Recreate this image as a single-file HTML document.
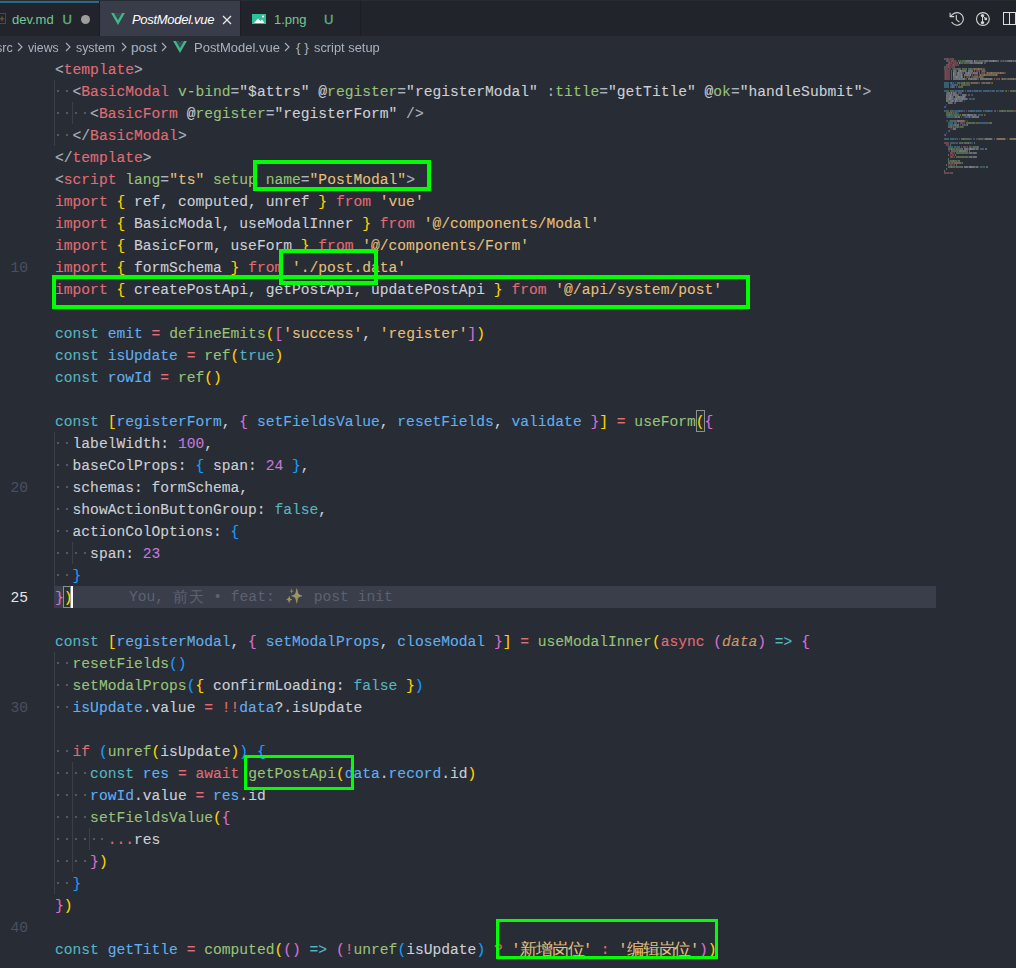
<!DOCTYPE html>
<html><head><meta charset="utf-8">
<style>
html,body{margin:0;padding:0;}
body{width:1016px;height:968px;overflow:hidden;background:#282c34;position:relative;font-family:"Liberation Sans",sans-serif;}
.tabs{position:absolute;left:0;top:0;width:1016px;height:36px;background:#21252b;}
.tab{position:absolute;top:0;height:36px;}
.tt{position:absolute;top:2px;height:36px;line-height:36px;font-size:13px;white-space:pre;}
.ct{position:absolute;top:1px;height:22px;line-height:22px;font-size:13.6px;transform-origin:0 50%;white-space:pre;color:#abb2bf;}
.chev{position:absolute;top:6px;width:7px;height:11px;}
.crumbs{position:absolute;left:0;top:36px;width:1016px;height:22px;background:#282c34;color:#abb2bf;font-size:13px;}
.ln{position:absolute;height:22px;line-height:22px;white-space:pre;font-family:"Liberation Mono",monospace;font-size:14.63px;color:#ccd0d7;-webkit-text-stroke:0.1px currentColor;}
.num{position:absolute;left:0;width:28px;text-align:right;height:22px;line-height:22px;font-family:"Liberation Mono",monospace;font-size:14.63px;color:#495162;}
.num.cur{color:#e6e6e6;}
.dot{position:absolute;width:2px;height:2px;background:#53575f;box-shadow:0 0 1px #464a52;}
.guide{position:absolute;width:1px;background:#3b4048;}
.p{color:#abb2bf}.t{color:#e06c75}.a{color:#98c379}.w{color:#ccd0d7}.k{color:#e06c75}.c{color:#56b6c2}.v{color:#61afef}.f{color:#98c379}.o{color:#e06c75}.n{color:#c678dd}.s{color:#e5c07b}.y{color:#ffd700}.m{color:#da70d6}.l{color:#179fff}.d{color:#d19a66}
.it{font-style:italic}
.bmb{position:absolute;height:22px;box-sizing:border-box;border:1px solid #8b8f96;background:#26332f;}
.cj{position:relative;top:-1.5px;display:inline-block;width:15.75px;text-align:center;font-size:16.5px;font-family:"Liberation Sans",sans-serif;-webkit-text-stroke:0;vertical-align:top;line-height:22px;height:22px;}
.curline{position:absolute;left:54px;top:586px;width:882px;height:22px;background:#393e4a;}
.cursor{position:absolute;left:71px;top:586px;width:2px;height:22px;background:#ffffff;}
.blame{position:absolute;left:129px;top:586px;height:22px;line-height:22px;font-family:"Liberation Mono",monospace;font-size:14.63px;color:#5c6370;white-space:pre;}
.cjb{display:inline-block;width:15.8px;font-family:"Liberation Sans",sans-serif;vertical-align:top;height:22px;line-height:22px;}
.emo{display:inline-block;width:21.5px;text-align:center;opacity:0.55;vertical-align:top;height:22px;line-height:22px;filter:saturate(0.6);}
.box{position:absolute;border:4px solid #00ff00;box-sizing:border-box;}
</style></head><body>
<div class="tabs">
  <div style="position:absolute;left:0;top:0;width:1016px;height:1px;background:#272b32;z-index:2;"></div>
  <div class="tab" style="left:0;width:100px;background:#21252b;"></div>
  <div style="position:absolute;left:0;top:1px;width:99px;height:2px;background:#2c6a8a;"></div>
  <svg style="position:absolute;left:-4px;top:13px" width="10" height="11" viewBox="0 0 10 11"><rect x="0.5" y="0.5" width="9" height="10" fill="none" stroke="#5a452f" stroke-width="1"/><path d="M6 3.5v4.5M3.8 5.8h4.4" stroke="#7a5c3b" stroke-width="1.1"/></svg>
  <div class="tt" style="left:12px;color:#73c991;">dev.md</div>
  <div class="tt" style="left:62.5px;color:#63b07e;-webkit-text-stroke:0.35px #63b07e;">U</div>
  <div style="position:absolute;left:80.5px;top:14.5px;width:9px;height:9px;border-radius:50%;background:#9d9d9d;"></div>
  <div style="position:absolute;left:99px;top:0;width:1px;height:36px;background:#1b1d23;"></div>
  <div class="tab" style="left:100px;top:1px;height:35px;width:140px;background:#383d49;"></div>
  <svg style="position:absolute;left:111px;top:13px" width="14" height="12" viewBox="0 0 261.76 226.69"><path d="M161.096.001l-30.225 52.351L100.647.001H-.005l130.877 226.688L261.749.001z" fill="#41b883"/><path d="M161.096.001l-30.225 52.351L100.647.001H52.346l78.526 136.01L209.398.001z" fill="#34495e"/></svg>
  <div class="tt" style="left:132px;color:#ffffff;font-style:italic;letter-spacing:-0.3px;">PostModel.vue</div>
  <svg style="position:absolute;left:222px;top:15px" width="10" height="10" viewBox="0 0 10 10"><path d="M1 1L9 9M9 1L1 9" stroke="#e8e8e8" stroke-width="1.3"/></svg>
  <div style="position:absolute;left:240px;top:0;width:1px;height:36px;background:#1b1d23;"></div>
  <div class="tab" style="left:241px;width:119px;background:#21252b;"></div>
  <svg style="position:absolute;left:252px;top:14px" width="14" height="10" viewBox="0 0 14 10"><rect x="0" y="0" width="14" height="10" fill="#2fbf9a"/><path d="M2 9L6 4.5L8.5 7L10 5.5L12.5 9Z" fill="#ffffff"/><circle cx="11" cy="2.5" r="1.1" fill="#ffffff"/></svg>
  <div class="tt" style="left:274px;color:#73c991;">1.png</div>
  <div class="tt" style="left:324px;color:#63b07e;-webkit-text-stroke:0.35px #63b07e;">U</div>
  <div style="position:absolute;left:360px;top:0;width:1px;height:36px;background:#1b1d23;"></div>
  <svg style="position:absolute;left:945px;top:8px" width="24" height="22" viewBox="0 0 24 22">
    <path d="M7.6 6.45A6.3 6.3 0 1 1 6.6 14.05" fill="none" stroke="#d4d4d4" stroke-width="1.1"/>
    <path d="M5.1 4.8V8.6H9.2" fill="none" stroke="#d4d4d4" stroke-width="1.1"/>
    <path d="M5.4 8.3L7.9 6.2" fill="none" stroke="#d4d4d4" stroke-width="1.1"/>
    <path d="M11.3 7V11.6L14.4 14.2" fill="none" stroke="#d4d4d4" stroke-width="1.1"/>
  </svg>
  <svg style="position:absolute;left:971px;top:8px" width="24" height="22" viewBox="0 0 24 22">
    <circle cx="11.9" cy="11" r="6.4" fill="none" stroke="#d4d4d4" stroke-width="1.1"/>
    <path d="M11.5 7.6V14.6M12.2 8.3L14.8 10.9" fill="none" stroke="#d4d4d4" stroke-width="1"/>
    <circle cx="11.5" cy="7.6" r="1.7" fill="#d4d4d4"/><circle cx="11.5" cy="14.6" r="1.7" fill="#d4d4d4"/><circle cx="14.8" cy="10.9" r="1.4" fill="#d4d4d4"/>
  </svg>
  <svg style="position:absolute;left:996px;top:8px" width="20" height="22" viewBox="0 0 20 22">
    <rect x="7.5" y="4.5" width="12" height="12" fill="none" stroke="#dedede" stroke-width="1"/>
    <path d="M13.5 4.5V16.5" stroke="#dedede" stroke-width="1"/>
  </svg>
</div>
<div class="crumbs">
  <div class="ct" style="left:-4px;transform:scaleX(0.93)">src</div>
  <svg class="chev" style="left:17px"><path d="M1 1L5 5L1 9" fill="none" stroke="#abb2bf" stroke-width="1.1"/></svg>
  <div class="ct" style="left:28px;transform:scaleX(0.90)">views</div>
  <svg class="chev" style="left:65px"><path d="M1 1L5 5L1 9" fill="none" stroke="#abb2bf" stroke-width="1.1"/></svg>
  <div class="ct" style="left:76px;transform:scaleX(0.91)">system</div>
  <svg class="chev" style="left:120.5px"><path d="M1 1L5 5L1 9" fill="none" stroke="#abb2bf" stroke-width="1.1"/></svg>
  <div class="ct" style="left:131px;transform:scaleX(1.0)">post</div>
  <svg class="chev" style="left:161px"><path d="M1 1L5 5L1 9" fill="none" stroke="#abb2bf" stroke-width="1.1"/></svg>
  <svg style="position:absolute;left:173px;top:4.5px" width="14" height="12" viewBox="0 0 261.76 226.69"><path d="M161.096.001l-30.225 52.351L100.647.001H-.005l130.877 226.688L261.749.001z" fill="#41b883"/><path d="M161.096.001l-30.225 52.351L100.647.001H52.346l78.526 136.01L209.398.001z" fill="#34495e"/></svg>
  <div class="ct" style="left:194px;transform:scaleX(0.955)">PostModel.vue</div>
  <svg class="chev" style="left:284px"><path d="M1 1L5 5L1 9" fill="none" stroke="#abb2bf" stroke-width="1.1"/></svg>
  <div class="ct" style="left:296px;">{ }</div>
  <div class="ct" style="left:313.5px;transform:scaleX(0.945)">script setup</div>
</div>
<div class="curline"></div>
<div class="bmb" style="left:62.98px;top:586px;width:8.28px;"></div>
<div class="bmb" style="left:695.94px;top:410px;width:8.78px;"></div>
<div class="ln" style="top:59px;left:55.00px"><span class="p">&lt;</span><span class="t">template</span><span class="p">&gt;</span></div>
<div class="dot" style="left:57.40px;top:90px"></div>
<div class="dot" style="left:66.18px;top:90px"></div>
<div class="ln" style="top:81px;left:72.56px"><span class="p">&lt;</span><span class="t">BasicModal</span> <span class="a">v-bind</span><span class="p">=</span><span class="w">&quot;$attrs&quot;</span> <span class="w">@</span><span class="a">register</span><span class="p">=</span><span class="w">&quot;registerModal&quot;</span> <span class="p">:</span><span class="a">title</span><span class="p">=</span><span class="w">&quot;getTitle&quot;</span> <span class="w">@</span><span class="a">ok</span><span class="p">=</span><span class="w">&quot;handleSubmit&quot;</span><span class="p">&gt;</span></div>
<div class="dot" style="left:57.40px;top:112px"></div>
<div class="dot" style="left:66.18px;top:112px"></div>
<div class="dot" style="left:74.96px;top:112px"></div>
<div class="dot" style="left:83.74px;top:112px"></div>
<div class="ln" style="top:103px;left:90.12px"><span class="p">&lt;</span><span class="t">BasicForm</span> <span class="w">@</span><span class="a">register</span><span class="p">=</span><span class="w">&quot;registerForm&quot;</span> <span class="p">/&gt;</span></div>
<div class="dot" style="left:57.40px;top:134px"></div>
<div class="dot" style="left:66.18px;top:134px"></div>
<div class="ln" style="top:125px;left:72.56px"><span class="p">&lt;/</span><span class="t">BasicModal</span><span class="p">&gt;</span></div>
<div class="ln" style="top:147px;left:55.00px"><span class="p">&lt;/</span><span class="t">template</span><span class="p">&gt;</span></div>
<div class="ln" style="top:169px;left:55.00px"><span class="p">&lt;</span><span class="t">script</span> <span class="a">lang</span><span class="p">=</span><span class="s">&quot;ts&quot;</span> <span class="a">setup</span> <span class="a">name</span><span class="p">=</span><span class="s">&quot;PostModal&quot;</span><span class="p">&gt;</span></div>
<div class="ln" style="top:191px;left:55.00px"><span class="k">import</span> <span class="y">{</span> <span class="w">ref, computed, unref</span> <span class="y">}</span> <span class="k">from</span> <span class="s">&#x27;vue&#x27;</span></div>
<div class="ln" style="top:213px;left:55.00px"><span class="k">import</span> <span class="y">{</span> <span class="w">BasicModal, useModalInner</span> <span class="y">}</span> <span class="k">from</span> <span class="s">&#x27;@/components/Modal&#x27;</span></div>
<div class="ln" style="top:235px;left:55.00px"><span class="k">import</span> <span class="y">{</span> <span class="w">BasicForm, useForm</span> <span class="y">}</span> <span class="k">from</span> <span class="s">&#x27;@/components/Form&#x27;</span></div>
<div class="ln" style="top:257px;left:55.00px"><span class="k">import</span> <span class="y">{</span> <span class="w">formSchema</span> <span class="y">}</span> <span class="k">from</span> <span class="s">&#x27;./post.data&#x27;</span></div>
<div class="ln" style="top:279px;left:55.00px"><span class="k">import</span> <span class="y">{</span> <span class="w">createPostApi, getPostApi, updatePostApi</span> <span class="y">}</span> <span class="k">from</span> <span class="s">&#x27;@/api/system/post&#x27;</span></div>
<div class="ln" style="top:301px;left:55.00px"></div>
<div class="ln" style="top:323px;left:55.00px"><span class="c">const</span> <span class="v">emit</span> <span class="o">=</span> <span class="f">defineEmits</span><span class="y">(</span><span class="m">[</span><span class="s">&#x27;success&#x27;</span><span class="w">, </span><span class="s">&#x27;register&#x27;</span><span class="m">]</span><span class="y">)</span></div>
<div class="ln" style="top:345px;left:55.00px"><span class="c">const</span> <span class="v">isUpdate</span> <span class="o">=</span> <span class="f">ref</span><span class="y">(</span><span class="c">true</span><span class="y">)</span></div>
<div class="ln" style="top:367px;left:55.00px"><span class="c">const</span> <span class="v">rowId</span> <span class="o">=</span> <span class="f">ref</span><span class="y">()</span></div>
<div class="ln" style="top:389px;left:55.00px"></div>
<div class="ln" style="top:411px;left:55.00px"><span class="c">const</span> <span class="y">[</span><span class="v">registerForm</span><span class="w">, </span><span class="m">{</span> <span class="v">setFieldsValue</span><span class="w">, </span><span class="v">resetFields</span><span class="w">, </span><span class="v">validate</span> <span class="m">}</span><span class="y">]</span> <span class="o">=</span> <span class="f">useForm</span><span class="y">(</span><span class="m">{</span></div>
<div class="dot" style="left:57.40px;top:442px"></div>
<div class="dot" style="left:66.18px;top:442px"></div>
<div class="ln" style="top:433px;left:72.56px"><span class="w">labelWidth: </span><span class="n">100</span><span class="w">,</span></div>
<div class="dot" style="left:57.40px;top:464px"></div>
<div class="dot" style="left:66.18px;top:464px"></div>
<div class="ln" style="top:455px;left:72.56px"><span class="w">baseColProps: </span><span class="l">{</span><span class="w"> span: </span><span class="n">24</span> <span class="l">}</span><span class="w">,</span></div>
<div class="dot" style="left:57.40px;top:486px"></div>
<div class="dot" style="left:66.18px;top:486px"></div>
<div class="ln" style="top:477px;left:72.56px"><span class="w">schemas: formSchema,</span></div>
<div class="dot" style="left:57.40px;top:508px"></div>
<div class="dot" style="left:66.18px;top:508px"></div>
<div class="ln" style="top:499px;left:72.56px"><span class="w">showActionButtonGroup: </span><span class="c">false</span><span class="w">,</span></div>
<div class="dot" style="left:57.40px;top:530px"></div>
<div class="dot" style="left:66.18px;top:530px"></div>
<div class="ln" style="top:521px;left:72.56px"><span class="w">actionColOptions: </span><span class="l">{</span></div>
<div class="dot" style="left:57.40px;top:552px"></div>
<div class="dot" style="left:66.18px;top:552px"></div>
<div class="dot" style="left:74.96px;top:552px"></div>
<div class="dot" style="left:83.74px;top:552px"></div>
<div class="ln" style="top:543px;left:90.12px"><span class="w">span: </span><span class="n">23</span></div>
<div class="dot" style="left:57.40px;top:574px"></div>
<div class="dot" style="left:66.18px;top:574px"></div>
<div class="ln" style="top:565px;left:72.56px"><span class="l">}</span></div>
<div class="ln" style="top:587px;left:55.00px"><span class="m">}</span><span class="y">)</span></div>
<div class="ln" style="top:609px;left:55.00px"></div>
<div class="ln" style="top:631px;left:55.00px"><span class="c">const</span> <span class="y">[</span><span class="v">registerModal</span><span class="w">, </span><span class="m">{</span> <span class="v">setModalProps</span><span class="w">, </span><span class="v">closeModal</span> <span class="m">}</span><span class="y">]</span> <span class="o">=</span> <span class="f">useModalInner</span><span class="y">(</span><span class="k">async</span> <span class="m">(</span><span class="d it">data</span><span class="m">)</span> <span class="c">=&gt;</span> <span class="m">{</span></div>
<div class="dot" style="left:57.40px;top:662px"></div>
<div class="dot" style="left:66.18px;top:662px"></div>
<div class="ln" style="top:653px;left:72.56px"><span class="f">resetFields</span><span class="l">()</span></div>
<div class="dot" style="left:57.40px;top:684px"></div>
<div class="dot" style="left:66.18px;top:684px"></div>
<div class="ln" style="top:675px;left:72.56px"><span class="f">setModalProps</span><span class="l">(</span><span class="y">{</span><span class="w"> confirmLoading: </span><span class="c">false</span> <span class="y">}</span><span class="l">)</span></div>
<div class="dot" style="left:57.40px;top:706px"></div>
<div class="dot" style="left:66.18px;top:706px"></div>
<div class="ln" style="top:697px;left:72.56px"><span class="v">isUpdate</span><span class="w">.value</span> <span class="o">=</span> <span class="o">!!</span><span class="v">data</span><span class="w">?.isUpdate</span></div>
<div class="ln" style="top:719px;left:55.00px"></div>
<div class="dot" style="left:57.40px;top:750px"></div>
<div class="dot" style="left:66.18px;top:750px"></div>
<div class="ln" style="top:741px;left:72.56px"><span class="k">if</span> <span class="l">(</span><span class="f">unref</span><span class="y">(</span><span class="w">isUpdate</span><span class="y">)</span><span class="l">)</span> <span class="l">{</span></div>
<div class="dot" style="left:57.40px;top:772px"></div>
<div class="dot" style="left:66.18px;top:772px"></div>
<div class="dot" style="left:74.96px;top:772px"></div>
<div class="dot" style="left:83.74px;top:772px"></div>
<div class="ln" style="top:763px;left:90.12px"><span class="c">const</span> <span class="v">res</span> <span class="o">=</span> <span class="k">await</span> <span class="f">getPostApi</span><span class="y">(</span><span class="v">data</span><span class="w">.</span><span class="v">record</span><span class="w">.id</span><span class="y">)</span></div>
<div class="dot" style="left:57.40px;top:794px"></div>
<div class="dot" style="left:66.18px;top:794px"></div>
<div class="dot" style="left:74.96px;top:794px"></div>
<div class="dot" style="left:83.74px;top:794px"></div>
<div class="ln" style="top:785px;left:90.12px"><span class="v">rowId</span><span class="w">.value</span> <span class="o">=</span> <span class="v">res</span><span class="w">.id</span></div>
<div class="dot" style="left:57.40px;top:816px"></div>
<div class="dot" style="left:66.18px;top:816px"></div>
<div class="dot" style="left:74.96px;top:816px"></div>
<div class="dot" style="left:83.74px;top:816px"></div>
<div class="ln" style="top:807px;left:90.12px"><span class="f">setFieldsValue</span><span class="y">(</span><span class="m">{</span></div>
<div class="dot" style="left:57.40px;top:838px"></div>
<div class="dot" style="left:66.18px;top:838px"></div>
<div class="dot" style="left:74.96px;top:838px"></div>
<div class="dot" style="left:83.74px;top:838px"></div>
<div class="dot" style="left:92.52px;top:838px"></div>
<div class="dot" style="left:101.30px;top:838px"></div>
<div class="ln" style="top:829px;left:107.68px"><span class="o">...</span><span class="w">res</span></div>
<div class="dot" style="left:57.40px;top:860px"></div>
<div class="dot" style="left:66.18px;top:860px"></div>
<div class="dot" style="left:74.96px;top:860px"></div>
<div class="dot" style="left:83.74px;top:860px"></div>
<div class="ln" style="top:851px;left:90.12px"><span class="m">}</span><span class="y">)</span></div>
<div class="dot" style="left:57.40px;top:882px"></div>
<div class="dot" style="left:66.18px;top:882px"></div>
<div class="ln" style="top:873px;left:72.56px"><span class="l">}</span></div>
<div class="ln" style="top:895px;left:55.00px"><span class="m">}</span><span class="y">)</span></div>
<div class="ln" style="top:917px;left:55.00px"></div>
<div class="ln" style="top:939px;left:55.00px"><span class="c">const</span> <span class="v">getTitle</span> <span class="o">=</span> <span class="f">computed</span><span class="y">(</span><span class="m">()</span> <span class="c">=&gt;</span> <span class="m">(</span><span class="o">!</span><span class="f">unref</span><span class="l">(</span><span class="w">isUpdate</span><span class="l">)</span> <span class="o">?</span> <span class="s">&#x27;</span><span class="cj" style="color:#e5c07b">新</span><span class="cj" style="color:#e5c07b">增</span><span class="cj" style="color:#e5c07b">岗</span><span class="cj" style="color:#e5c07b">位</span><span class="s">&#x27;</span> <span class="o">:</span> <span class="s">&#x27;</span><span class="cj" style="color:#e5c07b">编</span><span class="cj" style="color:#e5c07b">辑</span><span class="cj" style="color:#e5c07b">岗</span><span class="cj" style="color:#e5c07b">位</span><span class="s">&#x27;</span><span class="m">)</span><span class="y">)</span></div>
<div class="num" style="top:257px">10</div>
<div class="num" style="top:477px">20</div>
<div class="num cur" style="top:587px">25</div>
<div class="num" style="top:697px">30</div>
<div class="num" style="top:917px">40</div>
<div class="guide" style="left:54px;top:80px;height:66px"></div>
<div class="guide" style="left:54px;top:432px;height:154px"></div>
<div class="guide" style="left:54px;top:652px;height:242px"></div>
<div class="guide" style="left:72px;top:102px;height:22px"></div>
<div class="guide" style="left:72px;top:542px;height:22px"></div>
<div class="guide" style="left:72px;top:762px;height:110px"></div>
<div class="guide" style="left:89px;top:828px;height:22px"></div>
<svg style="position:absolute;left:0;top:0;opacity:1" width="1016" height="968"><rect x="944" y="58" width="1" height="2" fill="#abb2bf" fill-opacity="0.32"/><rect x="945" y="58" width="1" height="2" fill="#e06c75" fill-opacity="0.38"/><rect x="946" y="58" width="1" height="2" fill="#e06c75" fill-opacity="0.38"/><rect x="947" y="58" width="1" height="2" fill="#e06c75" fill-opacity="0.5"/><rect x="948" y="58" width="1" height="2" fill="#e06c75" fill-opacity="0.38"/><rect x="949" y="58" width="1" height="2" fill="#e06c75" fill-opacity="0.22"/><rect x="950" y="58" width="1" height="2" fill="#e06c75" fill-opacity="0.38"/><rect x="951" y="58" width="1" height="2" fill="#e06c75" fill-opacity="0.38"/><rect x="952" y="58" width="1" height="2" fill="#e06c75" fill-opacity="0.38"/><rect x="953" y="58" width="1" height="2" fill="#abb2bf" fill-opacity="0.32"/><rect x="946" y="60" width="1" height="2" fill="#abb2bf" fill-opacity="0.32"/><rect x="947" y="60" width="1" height="2" fill="#e06c75" fill-opacity="0.5"/><rect x="948" y="60" width="1" height="2" fill="#e06c75" fill-opacity="0.38"/><rect x="949" y="60" width="1" height="2" fill="#e06c75" fill-opacity="0.38"/><rect x="950" y="60" width="1" height="2" fill="#e06c75" fill-opacity="0.22"/><rect x="951" y="60" width="1" height="2" fill="#e06c75" fill-opacity="0.38"/><rect x="952" y="60" width="1" height="2" fill="#e06c75" fill-opacity="0.5"/><rect x="953" y="60" width="1" height="2" fill="#e06c75" fill-opacity="0.38"/><rect x="954" y="60" width="1" height="2" fill="#e06c75" fill-opacity="0.38"/><rect x="955" y="60" width="1" height="2" fill="#e06c75" fill-opacity="0.38"/><rect x="956" y="60" width="1" height="2" fill="#e06c75" fill-opacity="0.22"/><rect x="958" y="60" width="1" height="2" fill="#98c379" fill-opacity="0.38"/><rect x="959" y="60" width="1" height="2" fill="#98c379" fill-opacity="0.22"/><rect x="960" y="60" width="1" height="2" fill="#98c379" fill-opacity="0.38"/><rect x="961" y="60" width="1" height="2" fill="#98c379" fill-opacity="0.22"/><rect x="962" y="60" width="1" height="2" fill="#98c379" fill-opacity="0.38"/><rect x="963" y="60" width="1" height="2" fill="#98c379" fill-opacity="0.38"/><rect x="964" y="60" width="1" height="2" fill="#abb2bf" fill-opacity="0.32"/><rect x="965" y="60" width="1" height="2" fill="#d7dae0" fill-opacity="0.32"/><rect x="966" y="60" width="1" height="2" fill="#d7dae0" fill-opacity="0.38"/><rect x="967" y="60" width="1" height="2" fill="#d7dae0" fill-opacity="0.38"/><rect x="968" y="60" width="1" height="2" fill="#d7dae0" fill-opacity="0.38"/><rect x="969" y="60" width="1" height="2" fill="#d7dae0" fill-opacity="0.38"/><rect x="970" y="60" width="1" height="2" fill="#d7dae0" fill-opacity="0.38"/><rect x="971" y="60" width="1" height="2" fill="#d7dae0" fill-opacity="0.38"/><rect x="972" y="60" width="1" height="2" fill="#d7dae0" fill-opacity="0.32"/><rect x="974" y="60" width="1" height="2" fill="#d7dae0" fill-opacity="0.5"/><rect x="975" y="60" width="1" height="2" fill="#98c379" fill-opacity="0.38"/><rect x="976" y="60" width="1" height="2" fill="#98c379" fill-opacity="0.38"/><rect x="977" y="60" width="1" height="2" fill="#98c379" fill-opacity="0.38"/><rect x="978" y="60" width="1" height="2" fill="#98c379" fill-opacity="0.22"/><rect x="979" y="60" width="1" height="2" fill="#98c379" fill-opacity="0.38"/><rect x="980" y="60" width="1" height="2" fill="#98c379" fill-opacity="0.38"/><rect x="981" y="60" width="1" height="2" fill="#98c379" fill-opacity="0.38"/><rect x="982" y="60" width="1" height="2" fill="#98c379" fill-opacity="0.38"/><rect x="983" y="60" width="1" height="2" fill="#abb2bf" fill-opacity="0.32"/><rect x="984" y="60" width="1" height="2" fill="#d7dae0" fill-opacity="0.32"/><rect x="985" y="60" width="1" height="2" fill="#d7dae0" fill-opacity="0.38"/><rect x="986" y="60" width="1" height="2" fill="#d7dae0" fill-opacity="0.38"/><rect x="987" y="60" width="1" height="2" fill="#d7dae0" fill-opacity="0.38"/><rect x="988" y="60" width="1" height="2" fill="#d7dae0" fill-opacity="0.22"/><rect x="989" y="60" width="1" height="2" fill="#d7dae0" fill-opacity="0.38"/><rect x="990" y="60" width="1" height="2" fill="#d7dae0" fill-opacity="0.38"/><rect x="991" y="60" width="1" height="2" fill="#d7dae0" fill-opacity="0.38"/><rect x="992" y="60" width="1" height="2" fill="#d7dae0" fill-opacity="0.38"/><rect x="993" y="60" width="1" height="2" fill="#d7dae0" fill-opacity="0.5"/><rect x="994" y="60" width="1" height="2" fill="#d7dae0" fill-opacity="0.38"/><rect x="995" y="60" width="1" height="2" fill="#d7dae0" fill-opacity="0.38"/><rect x="996" y="60" width="1" height="2" fill="#d7dae0" fill-opacity="0.38"/><rect x="997" y="60" width="1" height="2" fill="#d7dae0" fill-opacity="0.22"/><rect x="998" y="60" width="1" height="2" fill="#d7dae0" fill-opacity="0.32"/><rect x="1000" y="60" width="1" height="2" fill="#abb2bf" fill-opacity="0.22"/><rect x="1001" y="60" width="1" height="2" fill="#98c379" fill-opacity="0.38"/><rect x="1002" y="60" width="1" height="2" fill="#98c379" fill-opacity="0.22"/><rect x="1003" y="60" width="1" height="2" fill="#98c379" fill-opacity="0.38"/><rect x="1004" y="60" width="1" height="2" fill="#98c379" fill-opacity="0.22"/><rect x="1005" y="60" width="1" height="2" fill="#98c379" fill-opacity="0.38"/><rect x="1006" y="60" width="1" height="2" fill="#abb2bf" fill-opacity="0.32"/><rect x="1007" y="60" width="1" height="2" fill="#d7dae0" fill-opacity="0.32"/><rect x="1008" y="60" width="1" height="2" fill="#d7dae0" fill-opacity="0.38"/><rect x="1009" y="60" width="1" height="2" fill="#d7dae0" fill-opacity="0.38"/><rect x="1010" y="60" width="1" height="2" fill="#d7dae0" fill-opacity="0.38"/><rect x="1011" y="60" width="1" height="2" fill="#d7dae0" fill-opacity="0.44"/><rect x="1012" y="60" width="1" height="2" fill="#d7dae0" fill-opacity="0.22"/><rect x="1013" y="60" width="1" height="2" fill="#d7dae0" fill-opacity="0.38"/><rect x="1014" y="60" width="1" height="2" fill="#d7dae0" fill-opacity="0.22"/><rect x="1015" y="60" width="1" height="2" fill="#d7dae0" fill-opacity="0.38"/><rect x="1016" y="60" width="1" height="2" fill="#d7dae0" fill-opacity="0.32"/><rect x="1018" y="60" width="1" height="2" fill="#d7dae0" fill-opacity="0.5"/><rect x="1019" y="60" width="1" height="2" fill="#98c379" fill-opacity="0.38"/><rect x="1020" y="60" width="1" height="2" fill="#98c379" fill-opacity="0.38"/><rect x="1021" y="60" width="1" height="2" fill="#abb2bf" fill-opacity="0.32"/><rect x="1022" y="60" width="1" height="2" fill="#d7dae0" fill-opacity="0.32"/><rect x="1023" y="60" width="1" height="2" fill="#d7dae0" fill-opacity="0.38"/><rect x="1024" y="60" width="1" height="2" fill="#d7dae0" fill-opacity="0.38"/><rect x="1025" y="60" width="1" height="2" fill="#d7dae0" fill-opacity="0.38"/><rect x="1026" y="60" width="1" height="2" fill="#d7dae0" fill-opacity="0.38"/><rect x="1027" y="60" width="1" height="2" fill="#d7dae0" fill-opacity="0.22"/><rect x="1028" y="60" width="1" height="2" fill="#d7dae0" fill-opacity="0.38"/><rect x="1029" y="60" width="1" height="2" fill="#d7dae0" fill-opacity="0.44"/><rect x="1030" y="60" width="1" height="2" fill="#d7dae0" fill-opacity="0.38"/><rect x="1031" y="60" width="1" height="2" fill="#d7dae0" fill-opacity="0.38"/><rect x="1032" y="60" width="1" height="2" fill="#d7dae0" fill-opacity="0.5"/><rect x="1033" y="60" width="1" height="2" fill="#d7dae0" fill-opacity="0.22"/><rect x="1034" y="60" width="1" height="2" fill="#d7dae0" fill-opacity="0.38"/><rect x="1035" y="60" width="1" height="2" fill="#d7dae0" fill-opacity="0.32"/><rect x="1036" y="60" width="1" height="2" fill="#abb2bf" fill-opacity="0.32"/><rect x="948" y="62" width="1" height="2" fill="#abb2bf" fill-opacity="0.32"/><rect x="949" y="62" width="1" height="2" fill="#e06c75" fill-opacity="0.5"/><rect x="950" y="62" width="1" height="2" fill="#e06c75" fill-opacity="0.38"/><rect x="951" y="62" width="1" height="2" fill="#e06c75" fill-opacity="0.38"/><rect x="952" y="62" width="1" height="2" fill="#e06c75" fill-opacity="0.22"/><rect x="953" y="62" width="1" height="2" fill="#e06c75" fill-opacity="0.38"/><rect x="954" y="62" width="1" height="2" fill="#e06c75" fill-opacity="0.44"/><rect x="955" y="62" width="1" height="2" fill="#e06c75" fill-opacity="0.38"/><rect x="956" y="62" width="1" height="2" fill="#e06c75" fill-opacity="0.38"/><rect x="957" y="62" width="1" height="2" fill="#e06c75" fill-opacity="0.5"/><rect x="959" y="62" width="1" height="2" fill="#d7dae0" fill-opacity="0.5"/><rect x="960" y="62" width="1" height="2" fill="#98c379" fill-opacity="0.38"/><rect x="961" y="62" width="1" height="2" fill="#98c379" fill-opacity="0.38"/><rect x="962" y="62" width="1" height="2" fill="#98c379" fill-opacity="0.38"/><rect x="963" y="62" width="1" height="2" fill="#98c379" fill-opacity="0.22"/><rect x="964" y="62" width="1" height="2" fill="#98c379" fill-opacity="0.38"/><rect x="965" y="62" width="1" height="2" fill="#98c379" fill-opacity="0.38"/><rect x="966" y="62" width="1" height="2" fill="#98c379" fill-opacity="0.38"/><rect x="967" y="62" width="1" height="2" fill="#98c379" fill-opacity="0.38"/><rect x="968" y="62" width="1" height="2" fill="#abb2bf" fill-opacity="0.32"/><rect x="969" y="62" width="1" height="2" fill="#d7dae0" fill-opacity="0.32"/><rect x="970" y="62" width="1" height="2" fill="#d7dae0" fill-opacity="0.38"/><rect x="971" y="62" width="1" height="2" fill="#d7dae0" fill-opacity="0.38"/><rect x="972" y="62" width="1" height="2" fill="#d7dae0" fill-opacity="0.38"/><rect x="973" y="62" width="1" height="2" fill="#d7dae0" fill-opacity="0.22"/><rect x="974" y="62" width="1" height="2" fill="#d7dae0" fill-opacity="0.38"/><rect x="975" y="62" width="1" height="2" fill="#d7dae0" fill-opacity="0.38"/><rect x="976" y="62" width="1" height="2" fill="#d7dae0" fill-opacity="0.38"/><rect x="977" y="62" width="1" height="2" fill="#d7dae0" fill-opacity="0.38"/><rect x="978" y="62" width="1" height="2" fill="#d7dae0" fill-opacity="0.44"/><rect x="979" y="62" width="1" height="2" fill="#d7dae0" fill-opacity="0.38"/><rect x="980" y="62" width="1" height="2" fill="#d7dae0" fill-opacity="0.38"/><rect x="981" y="62" width="1" height="2" fill="#d7dae0" fill-opacity="0.5"/><rect x="982" y="62" width="1" height="2" fill="#d7dae0" fill-opacity="0.32"/><rect x="984" y="62" width="1" height="2" fill="#abb2bf" fill-opacity="0.32"/><rect x="985" y="62" width="1" height="2" fill="#abb2bf" fill-opacity="0.32"/><rect x="946" y="64" width="1" height="2" fill="#abb2bf" fill-opacity="0.32"/><rect x="947" y="64" width="1" height="2" fill="#abb2bf" fill-opacity="0.32"/><rect x="948" y="64" width="1" height="2" fill="#e06c75" fill-opacity="0.5"/><rect x="949" y="64" width="1" height="2" fill="#e06c75" fill-opacity="0.38"/><rect x="950" y="64" width="1" height="2" fill="#e06c75" fill-opacity="0.38"/><rect x="951" y="64" width="1" height="2" fill="#e06c75" fill-opacity="0.22"/><rect x="952" y="64" width="1" height="2" fill="#e06c75" fill-opacity="0.38"/><rect x="953" y="64" width="1" height="2" fill="#e06c75" fill-opacity="0.5"/><rect x="954" y="64" width="1" height="2" fill="#e06c75" fill-opacity="0.38"/><rect x="955" y="64" width="1" height="2" fill="#e06c75" fill-opacity="0.38"/><rect x="956" y="64" width="1" height="2" fill="#e06c75" fill-opacity="0.38"/><rect x="957" y="64" width="1" height="2" fill="#e06c75" fill-opacity="0.22"/><rect x="958" y="64" width="1" height="2" fill="#abb2bf" fill-opacity="0.32"/><rect x="944" y="66" width="1" height="2" fill="#abb2bf" fill-opacity="0.32"/><rect x="945" y="66" width="1" height="2" fill="#abb2bf" fill-opacity="0.32"/><rect x="946" y="66" width="1" height="2" fill="#e06c75" fill-opacity="0.38"/><rect x="947" y="66" width="1" height="2" fill="#e06c75" fill-opacity="0.38"/><rect x="948" y="66" width="1" height="2" fill="#e06c75" fill-opacity="0.5"/><rect x="949" y="66" width="1" height="2" fill="#e06c75" fill-opacity="0.38"/><rect x="950" y="66" width="1" height="2" fill="#e06c75" fill-opacity="0.22"/><rect x="951" y="66" width="1" height="2" fill="#e06c75" fill-opacity="0.38"/><rect x="952" y="66" width="1" height="2" fill="#e06c75" fill-opacity="0.38"/><rect x="953" y="66" width="1" height="2" fill="#e06c75" fill-opacity="0.38"/><rect x="954" y="66" width="1" height="2" fill="#abb2bf" fill-opacity="0.32"/><rect x="944" y="68" width="1" height="2" fill="#abb2bf" fill-opacity="0.32"/><rect x="945" y="68" width="1" height="2" fill="#e06c75" fill-opacity="0.38"/><rect x="946" y="68" width="1" height="2" fill="#e06c75" fill-opacity="0.38"/><rect x="947" y="68" width="1" height="2" fill="#e06c75" fill-opacity="0.38"/><rect x="948" y="68" width="1" height="2" fill="#e06c75" fill-opacity="0.22"/><rect x="949" y="68" width="1" height="2" fill="#e06c75" fill-opacity="0.38"/><rect x="950" y="68" width="1" height="2" fill="#e06c75" fill-opacity="0.38"/><rect x="952" y="68" width="1" height="2" fill="#98c379" fill-opacity="0.22"/><rect x="953" y="68" width="1" height="2" fill="#98c379" fill-opacity="0.38"/><rect x="954" y="68" width="1" height="2" fill="#98c379" fill-opacity="0.38"/><rect x="955" y="68" width="1" height="2" fill="#98c379" fill-opacity="0.38"/><rect x="956" y="68" width="1" height="2" fill="#abb2bf" fill-opacity="0.32"/><rect x="957" y="68" width="1" height="2" fill="#e5c07b" fill-opacity="0.32"/><rect x="958" y="68" width="1" height="2" fill="#e5c07b" fill-opacity="0.38"/><rect x="959" y="68" width="1" height="2" fill="#e5c07b" fill-opacity="0.38"/><rect x="960" y="68" width="1" height="2" fill="#e5c07b" fill-opacity="0.32"/><rect x="962" y="68" width="1" height="2" fill="#98c379" fill-opacity="0.38"/><rect x="963" y="68" width="1" height="2" fill="#98c379" fill-opacity="0.38"/><rect x="964" y="68" width="1" height="2" fill="#98c379" fill-opacity="0.38"/><rect x="965" y="68" width="1" height="2" fill="#98c379" fill-opacity="0.38"/><rect x="966" y="68" width="1" height="2" fill="#98c379" fill-opacity="0.38"/><rect x="968" y="68" width="1" height="2" fill="#98c379" fill-opacity="0.38"/><rect x="969" y="68" width="1" height="2" fill="#98c379" fill-opacity="0.38"/><rect x="970" y="68" width="1" height="2" fill="#98c379" fill-opacity="0.5"/><rect x="971" y="68" width="1" height="2" fill="#98c379" fill-opacity="0.38"/><rect x="972" y="68" width="1" height="2" fill="#abb2bf" fill-opacity="0.32"/><rect x="973" y="68" width="1" height="2" fill="#e5c07b" fill-opacity="0.32"/><rect x="974" y="68" width="1" height="2" fill="#e5c07b" fill-opacity="0.44"/><rect x="975" y="68" width="1" height="2" fill="#e5c07b" fill-opacity="0.38"/><rect x="976" y="68" width="1" height="2" fill="#e5c07b" fill-opacity="0.38"/><rect x="977" y="68" width="1" height="2" fill="#e5c07b" fill-opacity="0.38"/><rect x="978" y="68" width="1" height="2" fill="#e5c07b" fill-opacity="0.5"/><rect x="979" y="68" width="1" height="2" fill="#e5c07b" fill-opacity="0.38"/><rect x="980" y="68" width="1" height="2" fill="#e5c07b" fill-opacity="0.38"/><rect x="981" y="68" width="1" height="2" fill="#e5c07b" fill-opacity="0.38"/><rect x="982" y="68" width="1" height="2" fill="#e5c07b" fill-opacity="0.22"/><rect x="983" y="68" width="1" height="2" fill="#e5c07b" fill-opacity="0.32"/><rect x="984" y="68" width="1" height="2" fill="#abb2bf" fill-opacity="0.32"/><rect x="944" y="70" width="1" height="2" fill="#e06c75" fill-opacity="0.22"/><rect x="945" y="70" width="1" height="2" fill="#e06c75" fill-opacity="0.5"/><rect x="946" y="70" width="1" height="2" fill="#e06c75" fill-opacity="0.38"/><rect x="947" y="70" width="1" height="2" fill="#e06c75" fill-opacity="0.38"/><rect x="948" y="70" width="1" height="2" fill="#e06c75" fill-opacity="0.38"/><rect x="949" y="70" width="1" height="2" fill="#e06c75" fill-opacity="0.38"/><rect x="951" y="70" width="1" height="2" fill="#ffd700" fill-opacity="0.32"/><rect x="953" y="70" width="1" height="2" fill="#d7dae0" fill-opacity="0.38"/><rect x="954" y="70" width="1" height="2" fill="#d7dae0" fill-opacity="0.38"/><rect x="955" y="70" width="1" height="2" fill="#d7dae0" fill-opacity="0.38"/><rect x="956" y="70" width="1" height="2" fill="#d7dae0" fill-opacity="0.22"/><rect x="958" y="70" width="1" height="2" fill="#d7dae0" fill-opacity="0.38"/><rect x="959" y="70" width="1" height="2" fill="#d7dae0" fill-opacity="0.38"/><rect x="960" y="70" width="1" height="2" fill="#d7dae0" fill-opacity="0.5"/><rect x="961" y="70" width="1" height="2" fill="#d7dae0" fill-opacity="0.38"/><rect x="962" y="70" width="1" height="2" fill="#d7dae0" fill-opacity="0.38"/><rect x="963" y="70" width="1" height="2" fill="#d7dae0" fill-opacity="0.38"/><rect x="964" y="70" width="1" height="2" fill="#d7dae0" fill-opacity="0.38"/><rect x="965" y="70" width="1" height="2" fill="#d7dae0" fill-opacity="0.38"/><rect x="966" y="70" width="1" height="2" fill="#d7dae0" fill-opacity="0.22"/><rect x="968" y="70" width="1" height="2" fill="#d7dae0" fill-opacity="0.38"/><rect x="969" y="70" width="1" height="2" fill="#d7dae0" fill-opacity="0.38"/><rect x="970" y="70" width="1" height="2" fill="#d7dae0" fill-opacity="0.38"/><rect x="971" y="70" width="1" height="2" fill="#d7dae0" fill-opacity="0.38"/><rect x="972" y="70" width="1" height="2" fill="#d7dae0" fill-opacity="0.38"/><rect x="974" y="70" width="1" height="2" fill="#ffd700" fill-opacity="0.32"/><rect x="976" y="70" width="1" height="2" fill="#e06c75" fill-opacity="0.38"/><rect x="977" y="70" width="1" height="2" fill="#e06c75" fill-opacity="0.38"/><rect x="978" y="70" width="1" height="2" fill="#e06c75" fill-opacity="0.38"/><rect x="979" y="70" width="1" height="2" fill="#e06c75" fill-opacity="0.5"/><rect x="981" y="70" width="1" height="2" fill="#e5c07b" fill-opacity="0.22"/><rect x="982" y="70" width="1" height="2" fill="#e5c07b" fill-opacity="0.38"/><rect x="983" y="70" width="1" height="2" fill="#e5c07b" fill-opacity="0.38"/><rect x="984" y="70" width="1" height="2" fill="#e5c07b" fill-opacity="0.38"/><rect x="985" y="70" width="1" height="2" fill="#e5c07b" fill-opacity="0.22"/><rect x="944" y="72" width="1" height="2" fill="#e06c75" fill-opacity="0.22"/><rect x="945" y="72" width="1" height="2" fill="#e06c75" fill-opacity="0.5"/><rect x="946" y="72" width="1" height="2" fill="#e06c75" fill-opacity="0.38"/><rect x="947" y="72" width="1" height="2" fill="#e06c75" fill-opacity="0.38"/><rect x="948" y="72" width="1" height="2" fill="#e06c75" fill-opacity="0.38"/><rect x="949" y="72" width="1" height="2" fill="#e06c75" fill-opacity="0.38"/><rect x="951" y="72" width="1" height="2" fill="#ffd700" fill-opacity="0.32"/><rect x="953" y="72" width="1" height="2" fill="#d7dae0" fill-opacity="0.5"/><rect x="954" y="72" width="1" height="2" fill="#d7dae0" fill-opacity="0.38"/><rect x="955" y="72" width="1" height="2" fill="#d7dae0" fill-opacity="0.38"/><rect x="956" y="72" width="1" height="2" fill="#d7dae0" fill-opacity="0.22"/><rect x="957" y="72" width="1" height="2" fill="#d7dae0" fill-opacity="0.38"/><rect x="958" y="72" width="1" height="2" fill="#d7dae0" fill-opacity="0.5"/><rect x="959" y="72" width="1" height="2" fill="#d7dae0" fill-opacity="0.38"/><rect x="960" y="72" width="1" height="2" fill="#d7dae0" fill-opacity="0.38"/><rect x="961" y="72" width="1" height="2" fill="#d7dae0" fill-opacity="0.38"/><rect x="962" y="72" width="1" height="2" fill="#d7dae0" fill-opacity="0.22"/><rect x="963" y="72" width="1" height="2" fill="#d7dae0" fill-opacity="0.22"/><rect x="965" y="72" width="1" height="2" fill="#d7dae0" fill-opacity="0.38"/><rect x="966" y="72" width="1" height="2" fill="#d7dae0" fill-opacity="0.38"/><rect x="967" y="72" width="1" height="2" fill="#d7dae0" fill-opacity="0.38"/><rect x="968" y="72" width="1" height="2" fill="#d7dae0" fill-opacity="0.5"/><rect x="969" y="72" width="1" height="2" fill="#d7dae0" fill-opacity="0.38"/><rect x="970" y="72" width="1" height="2" fill="#d7dae0" fill-opacity="0.38"/><rect x="971" y="72" width="1" height="2" fill="#d7dae0" fill-opacity="0.38"/><rect x="972" y="72" width="1" height="2" fill="#d7dae0" fill-opacity="0.22"/><rect x="973" y="72" width="1" height="2" fill="#d7dae0" fill-opacity="0.44"/><rect x="974" y="72" width="1" height="2" fill="#d7dae0" fill-opacity="0.38"/><rect x="975" y="72" width="1" height="2" fill="#d7dae0" fill-opacity="0.38"/><rect x="976" y="72" width="1" height="2" fill="#d7dae0" fill-opacity="0.38"/><rect x="977" y="72" width="1" height="2" fill="#d7dae0" fill-opacity="0.38"/><rect x="979" y="72" width="1" height="2" fill="#ffd700" fill-opacity="0.32"/><rect x="981" y="72" width="1" height="2" fill="#e06c75" fill-opacity="0.38"/><rect x="982" y="72" width="1" height="2" fill="#e06c75" fill-opacity="0.38"/><rect x="983" y="72" width="1" height="2" fill="#e06c75" fill-opacity="0.38"/><rect x="984" y="72" width="1" height="2" fill="#e06c75" fill-opacity="0.5"/><rect x="986" y="72" width="1" height="2" fill="#e5c07b" fill-opacity="0.22"/><rect x="987" y="72" width="1" height="2" fill="#e5c07b" fill-opacity="0.5"/><rect x="988" y="72" width="1" height="2" fill="#e5c07b" fill-opacity="0.32"/><rect x="989" y="72" width="1" height="2" fill="#e5c07b" fill-opacity="0.38"/><rect x="990" y="72" width="1" height="2" fill="#e5c07b" fill-opacity="0.38"/><rect x="991" y="72" width="1" height="2" fill="#e5c07b" fill-opacity="0.5"/><rect x="992" y="72" width="1" height="2" fill="#e5c07b" fill-opacity="0.38"/><rect x="993" y="72" width="1" height="2" fill="#e5c07b" fill-opacity="0.38"/><rect x="994" y="72" width="1" height="2" fill="#e5c07b" fill-opacity="0.38"/><rect x="995" y="72" width="1" height="2" fill="#e5c07b" fill-opacity="0.38"/><rect x="996" y="72" width="1" height="2" fill="#e5c07b" fill-opacity="0.38"/><rect x="997" y="72" width="1" height="2" fill="#e5c07b" fill-opacity="0.38"/><rect x="998" y="72" width="1" height="2" fill="#e5c07b" fill-opacity="0.38"/><rect x="999" y="72" width="1" height="2" fill="#e5c07b" fill-opacity="0.32"/><rect x="1000" y="72" width="1" height="2" fill="#e5c07b" fill-opacity="0.5"/><rect x="1001" y="72" width="1" height="2" fill="#e5c07b" fill-opacity="0.38"/><rect x="1002" y="72" width="1" height="2" fill="#e5c07b" fill-opacity="0.38"/><rect x="1003" y="72" width="1" height="2" fill="#e5c07b" fill-opacity="0.38"/><rect x="1004" y="72" width="1" height="2" fill="#e5c07b" fill-opacity="0.22"/><rect x="1005" y="72" width="1" height="2" fill="#e5c07b" fill-opacity="0.22"/><rect x="944" y="74" width="1" height="2" fill="#e06c75" fill-opacity="0.22"/><rect x="945" y="74" width="1" height="2" fill="#e06c75" fill-opacity="0.5"/><rect x="946" y="74" width="1" height="2" fill="#e06c75" fill-opacity="0.38"/><rect x="947" y="74" width="1" height="2" fill="#e06c75" fill-opacity="0.38"/><rect x="948" y="74" width="1" height="2" fill="#e06c75" fill-opacity="0.38"/><rect x="949" y="74" width="1" height="2" fill="#e06c75" fill-opacity="0.38"/><rect x="951" y="74" width="1" height="2" fill="#ffd700" fill-opacity="0.32"/><rect x="953" y="74" width="1" height="2" fill="#d7dae0" fill-opacity="0.5"/><rect x="954" y="74" width="1" height="2" fill="#d7dae0" fill-opacity="0.38"/><rect x="955" y="74" width="1" height="2" fill="#d7dae0" fill-opacity="0.38"/><rect x="956" y="74" width="1" height="2" fill="#d7dae0" fill-opacity="0.22"/><rect x="957" y="74" width="1" height="2" fill="#d7dae0" fill-opacity="0.38"/><rect x="958" y="74" width="1" height="2" fill="#d7dae0" fill-opacity="0.44"/><rect x="959" y="74" width="1" height="2" fill="#d7dae0" fill-opacity="0.38"/><rect x="960" y="74" width="1" height="2" fill="#d7dae0" fill-opacity="0.38"/><rect x="961" y="74" width="1" height="2" fill="#d7dae0" fill-opacity="0.5"/><rect x="962" y="74" width="1" height="2" fill="#d7dae0" fill-opacity="0.22"/><rect x="964" y="74" width="1" height="2" fill="#d7dae0" fill-opacity="0.38"/><rect x="965" y="74" width="1" height="2" fill="#d7dae0" fill-opacity="0.38"/><rect x="966" y="74" width="1" height="2" fill="#d7dae0" fill-opacity="0.38"/><rect x="967" y="74" width="1" height="2" fill="#d7dae0" fill-opacity="0.44"/><rect x="968" y="74" width="1" height="2" fill="#d7dae0" fill-opacity="0.38"/><rect x="969" y="74" width="1" height="2" fill="#d7dae0" fill-opacity="0.38"/><rect x="970" y="74" width="1" height="2" fill="#d7dae0" fill-opacity="0.5"/><rect x="972" y="74" width="1" height="2" fill="#ffd700" fill-opacity="0.32"/><rect x="974" y="74" width="1" height="2" fill="#e06c75" fill-opacity="0.38"/><rect x="975" y="74" width="1" height="2" fill="#e06c75" fill-opacity="0.38"/><rect x="976" y="74" width="1" height="2" fill="#e06c75" fill-opacity="0.38"/><rect x="977" y="74" width="1" height="2" fill="#e06c75" fill-opacity="0.5"/><rect x="979" y="74" width="1" height="2" fill="#e5c07b" fill-opacity="0.22"/><rect x="980" y="74" width="1" height="2" fill="#e5c07b" fill-opacity="0.5"/><rect x="981" y="74" width="1" height="2" fill="#e5c07b" fill-opacity="0.32"/><rect x="982" y="74" width="1" height="2" fill="#e5c07b" fill-opacity="0.38"/><rect x="983" y="74" width="1" height="2" fill="#e5c07b" fill-opacity="0.38"/><rect x="984" y="74" width="1" height="2" fill="#e5c07b" fill-opacity="0.5"/><rect x="985" y="74" width="1" height="2" fill="#e5c07b" fill-opacity="0.38"/><rect x="986" y="74" width="1" height="2" fill="#e5c07b" fill-opacity="0.38"/><rect x="987" y="74" width="1" height="2" fill="#e5c07b" fill-opacity="0.38"/><rect x="988" y="74" width="1" height="2" fill="#e5c07b" fill-opacity="0.38"/><rect x="989" y="74" width="1" height="2" fill="#e5c07b" fill-opacity="0.38"/><rect x="990" y="74" width="1" height="2" fill="#e5c07b" fill-opacity="0.38"/><rect x="991" y="74" width="1" height="2" fill="#e5c07b" fill-opacity="0.38"/><rect x="992" y="74" width="1" height="2" fill="#e5c07b" fill-opacity="0.32"/><rect x="993" y="74" width="1" height="2" fill="#e5c07b" fill-opacity="0.44"/><rect x="994" y="74" width="1" height="2" fill="#e5c07b" fill-opacity="0.38"/><rect x="995" y="74" width="1" height="2" fill="#e5c07b" fill-opacity="0.38"/><rect x="996" y="74" width="1" height="2" fill="#e5c07b" fill-opacity="0.5"/><rect x="997" y="74" width="1" height="2" fill="#e5c07b" fill-opacity="0.22"/><rect x="944" y="76" width="1" height="2" fill="#e06c75" fill-opacity="0.22"/><rect x="945" y="76" width="1" height="2" fill="#e06c75" fill-opacity="0.5"/><rect x="946" y="76" width="1" height="2" fill="#e06c75" fill-opacity="0.38"/><rect x="947" y="76" width="1" height="2" fill="#e06c75" fill-opacity="0.38"/><rect x="948" y="76" width="1" height="2" fill="#e06c75" fill-opacity="0.38"/><rect x="949" y="76" width="1" height="2" fill="#e06c75" fill-opacity="0.38"/><rect x="951" y="76" width="1" height="2" fill="#ffd700" fill-opacity="0.32"/><rect x="953" y="76" width="1" height="2" fill="#d7dae0" fill-opacity="0.38"/><rect x="954" y="76" width="1" height="2" fill="#d7dae0" fill-opacity="0.38"/><rect x="955" y="76" width="1" height="2" fill="#d7dae0" fill-opacity="0.38"/><rect x="956" y="76" width="1" height="2" fill="#d7dae0" fill-opacity="0.5"/><rect x="957" y="76" width="1" height="2" fill="#d7dae0" fill-opacity="0.44"/><rect x="958" y="76" width="1" height="2" fill="#d7dae0" fill-opacity="0.38"/><rect x="959" y="76" width="1" height="2" fill="#d7dae0" fill-opacity="0.38"/><rect x="960" y="76" width="1" height="2" fill="#d7dae0" fill-opacity="0.38"/><rect x="961" y="76" width="1" height="2" fill="#d7dae0" fill-opacity="0.5"/><rect x="962" y="76" width="1" height="2" fill="#d7dae0" fill-opacity="0.38"/><rect x="964" y="76" width="1" height="2" fill="#ffd700" fill-opacity="0.32"/><rect x="966" y="76" width="1" height="2" fill="#e06c75" fill-opacity="0.38"/><rect x="967" y="76" width="1" height="2" fill="#e06c75" fill-opacity="0.38"/><rect x="968" y="76" width="1" height="2" fill="#e06c75" fill-opacity="0.38"/><rect x="969" y="76" width="1" height="2" fill="#e06c75" fill-opacity="0.5"/><rect x="971" y="76" width="1" height="2" fill="#e5c07b" fill-opacity="0.22"/><rect x="972" y="76" width="1" height="2" fill="#e5c07b" fill-opacity="0.22"/><rect x="973" y="76" width="1" height="2" fill="#e5c07b" fill-opacity="0.32"/><rect x="974" y="76" width="1" height="2" fill="#e5c07b" fill-opacity="0.38"/><rect x="975" y="76" width="1" height="2" fill="#e5c07b" fill-opacity="0.38"/><rect x="976" y="76" width="1" height="2" fill="#e5c07b" fill-opacity="0.38"/><rect x="977" y="76" width="1" height="2" fill="#e5c07b" fill-opacity="0.38"/><rect x="978" y="76" width="1" height="2" fill="#e5c07b" fill-opacity="0.22"/><rect x="979" y="76" width="1" height="2" fill="#e5c07b" fill-opacity="0.38"/><rect x="980" y="76" width="1" height="2" fill="#e5c07b" fill-opacity="0.38"/><rect x="981" y="76" width="1" height="2" fill="#e5c07b" fill-opacity="0.38"/><rect x="982" y="76" width="1" height="2" fill="#e5c07b" fill-opacity="0.38"/><rect x="983" y="76" width="1" height="2" fill="#e5c07b" fill-opacity="0.22"/><rect x="944" y="78" width="1" height="2" fill="#e06c75" fill-opacity="0.22"/><rect x="945" y="78" width="1" height="2" fill="#e06c75" fill-opacity="0.5"/><rect x="946" y="78" width="1" height="2" fill="#e06c75" fill-opacity="0.38"/><rect x="947" y="78" width="1" height="2" fill="#e06c75" fill-opacity="0.38"/><rect x="948" y="78" width="1" height="2" fill="#e06c75" fill-opacity="0.38"/><rect x="949" y="78" width="1" height="2" fill="#e06c75" fill-opacity="0.38"/><rect x="951" y="78" width="1" height="2" fill="#ffd700" fill-opacity="0.32"/><rect x="953" y="78" width="1" height="2" fill="#d7dae0" fill-opacity="0.38"/><rect x="954" y="78" width="1" height="2" fill="#d7dae0" fill-opacity="0.38"/><rect x="955" y="78" width="1" height="2" fill="#d7dae0" fill-opacity="0.38"/><rect x="956" y="78" width="1" height="2" fill="#d7dae0" fill-opacity="0.38"/><rect x="957" y="78" width="1" height="2" fill="#d7dae0" fill-opacity="0.38"/><rect x="958" y="78" width="1" height="2" fill="#d7dae0" fill-opacity="0.38"/><rect x="959" y="78" width="1" height="2" fill="#d7dae0" fill-opacity="0.44"/><rect x="960" y="78" width="1" height="2" fill="#d7dae0" fill-opacity="0.38"/><rect x="961" y="78" width="1" height="2" fill="#d7dae0" fill-opacity="0.38"/><rect x="962" y="78" width="1" height="2" fill="#d7dae0" fill-opacity="0.38"/><rect x="963" y="78" width="1" height="2" fill="#d7dae0" fill-opacity="0.44"/><rect x="964" y="78" width="1" height="2" fill="#d7dae0" fill-opacity="0.38"/><rect x="965" y="78" width="1" height="2" fill="#d7dae0" fill-opacity="0.22"/><rect x="966" y="78" width="1" height="2" fill="#d7dae0" fill-opacity="0.22"/><rect x="968" y="78" width="1" height="2" fill="#d7dae0" fill-opacity="0.38"/><rect x="969" y="78" width="1" height="2" fill="#d7dae0" fill-opacity="0.38"/><rect x="970" y="78" width="1" height="2" fill="#d7dae0" fill-opacity="0.38"/><rect x="971" y="78" width="1" height="2" fill="#d7dae0" fill-opacity="0.44"/><rect x="972" y="78" width="1" height="2" fill="#d7dae0" fill-opacity="0.38"/><rect x="973" y="78" width="1" height="2" fill="#d7dae0" fill-opacity="0.38"/><rect x="974" y="78" width="1" height="2" fill="#d7dae0" fill-opacity="0.38"/><rect x="975" y="78" width="1" height="2" fill="#d7dae0" fill-opacity="0.44"/><rect x="976" y="78" width="1" height="2" fill="#d7dae0" fill-opacity="0.38"/><rect x="977" y="78" width="1" height="2" fill="#d7dae0" fill-opacity="0.22"/><rect x="978" y="78" width="1" height="2" fill="#d7dae0" fill-opacity="0.22"/><rect x="980" y="78" width="1" height="2" fill="#d7dae0" fill-opacity="0.38"/><rect x="981" y="78" width="1" height="2" fill="#d7dae0" fill-opacity="0.38"/><rect x="982" y="78" width="1" height="2" fill="#d7dae0" fill-opacity="0.38"/><rect x="983" y="78" width="1" height="2" fill="#d7dae0" fill-opacity="0.38"/><rect x="984" y="78" width="1" height="2" fill="#d7dae0" fill-opacity="0.38"/><rect x="985" y="78" width="1" height="2" fill="#d7dae0" fill-opacity="0.38"/><rect x="986" y="78" width="1" height="2" fill="#d7dae0" fill-opacity="0.44"/><rect x="987" y="78" width="1" height="2" fill="#d7dae0" fill-opacity="0.38"/><rect x="988" y="78" width="1" height="2" fill="#d7dae0" fill-opacity="0.38"/><rect x="989" y="78" width="1" height="2" fill="#d7dae0" fill-opacity="0.38"/><rect x="990" y="78" width="1" height="2" fill="#d7dae0" fill-opacity="0.44"/><rect x="991" y="78" width="1" height="2" fill="#d7dae0" fill-opacity="0.38"/><rect x="992" y="78" width="1" height="2" fill="#d7dae0" fill-opacity="0.22"/><rect x="994" y="78" width="1" height="2" fill="#ffd700" fill-opacity="0.32"/><rect x="996" y="78" width="1" height="2" fill="#e06c75" fill-opacity="0.38"/><rect x="997" y="78" width="1" height="2" fill="#e06c75" fill-opacity="0.38"/><rect x="998" y="78" width="1" height="2" fill="#e06c75" fill-opacity="0.38"/><rect x="999" y="78" width="1" height="2" fill="#e06c75" fill-opacity="0.5"/><rect x="1001" y="78" width="1" height="2" fill="#e5c07b" fill-opacity="0.22"/><rect x="1002" y="78" width="1" height="2" fill="#e5c07b" fill-opacity="0.5"/><rect x="1003" y="78" width="1" height="2" fill="#e5c07b" fill-opacity="0.32"/><rect x="1004" y="78" width="1" height="2" fill="#e5c07b" fill-opacity="0.38"/><rect x="1005" y="78" width="1" height="2" fill="#e5c07b" fill-opacity="0.38"/><rect x="1006" y="78" width="1" height="2" fill="#e5c07b" fill-opacity="0.22"/><rect x="1007" y="78" width="1" height="2" fill="#e5c07b" fill-opacity="0.32"/><rect x="1008" y="78" width="1" height="2" fill="#e5c07b" fill-opacity="0.38"/><rect x="1009" y="78" width="1" height="2" fill="#e5c07b" fill-opacity="0.38"/><rect x="1010" y="78" width="1" height="2" fill="#e5c07b" fill-opacity="0.38"/><rect x="1011" y="78" width="1" height="2" fill="#e5c07b" fill-opacity="0.38"/><rect x="1012" y="78" width="1" height="2" fill="#e5c07b" fill-opacity="0.38"/><rect x="1013" y="78" width="1" height="2" fill="#e5c07b" fill-opacity="0.5"/><rect x="1014" y="78" width="1" height="2" fill="#e5c07b" fill-opacity="0.32"/><rect x="1015" y="78" width="1" height="2" fill="#e5c07b" fill-opacity="0.38"/><rect x="1016" y="78" width="1" height="2" fill="#e5c07b" fill-opacity="0.38"/><rect x="1017" y="78" width="1" height="2" fill="#e5c07b" fill-opacity="0.38"/><rect x="1018" y="78" width="1" height="2" fill="#e5c07b" fill-opacity="0.38"/><rect x="1019" y="78" width="1" height="2" fill="#e5c07b" fill-opacity="0.22"/><rect x="944" y="82" width="1" height="2" fill="#56b6c2" fill-opacity="0.38"/><rect x="945" y="82" width="1" height="2" fill="#56b6c2" fill-opacity="0.38"/><rect x="946" y="82" width="1" height="2" fill="#56b6c2" fill-opacity="0.38"/><rect x="947" y="82" width="1" height="2" fill="#56b6c2" fill-opacity="0.38"/><rect x="948" y="82" width="1" height="2" fill="#56b6c2" fill-opacity="0.38"/><rect x="950" y="82" width="1" height="2" fill="#61afef" fill-opacity="0.38"/><rect x="951" y="82" width="1" height="2" fill="#61afef" fill-opacity="0.5"/><rect x="952" y="82" width="1" height="2" fill="#61afef" fill-opacity="0.22"/><rect x="953" y="82" width="1" height="2" fill="#61afef" fill-opacity="0.38"/><rect x="955" y="82" width="1" height="2" fill="#e06c75" fill-opacity="0.32"/><rect x="957" y="82" width="1" height="2" fill="#98c379" fill-opacity="0.38"/><rect x="958" y="82" width="1" height="2" fill="#98c379" fill-opacity="0.38"/><rect x="959" y="82" width="1" height="2" fill="#98c379" fill-opacity="0.38"/><rect x="960" y="82" width="1" height="2" fill="#98c379" fill-opacity="0.22"/><rect x="961" y="82" width="1" height="2" fill="#98c379" fill-opacity="0.38"/><rect x="962" y="82" width="1" height="2" fill="#98c379" fill-opacity="0.38"/><rect x="963" y="82" width="1" height="2" fill="#98c379" fill-opacity="0.44"/><rect x="964" y="82" width="1" height="2" fill="#98c379" fill-opacity="0.5"/><rect x="965" y="82" width="1" height="2" fill="#98c379" fill-opacity="0.22"/><rect x="966" y="82" width="1" height="2" fill="#98c379" fill-opacity="0.38"/><rect x="967" y="82" width="1" height="2" fill="#98c379" fill-opacity="0.38"/><rect x="968" y="82" width="1" height="2" fill="#ffd700" fill-opacity="0.32"/><rect x="969" y="82" width="1" height="2" fill="#da70d6" fill-opacity="0.32"/><rect x="970" y="82" width="1" height="2" fill="#e5c07b" fill-opacity="0.22"/><rect x="971" y="82" width="1" height="2" fill="#e5c07b" fill-opacity="0.38"/><rect x="972" y="82" width="1" height="2" fill="#e5c07b" fill-opacity="0.38"/><rect x="973" y="82" width="1" height="2" fill="#e5c07b" fill-opacity="0.38"/><rect x="974" y="82" width="1" height="2" fill="#e5c07b" fill-opacity="0.38"/><rect x="975" y="82" width="1" height="2" fill="#e5c07b" fill-opacity="0.38"/><rect x="976" y="82" width="1" height="2" fill="#e5c07b" fill-opacity="0.38"/><rect x="977" y="82" width="1" height="2" fill="#e5c07b" fill-opacity="0.38"/><rect x="978" y="82" width="1" height="2" fill="#e5c07b" fill-opacity="0.22"/><rect x="979" y="82" width="1" height="2" fill="#d7dae0" fill-opacity="0.22"/><rect x="981" y="82" width="1" height="2" fill="#e5c07b" fill-opacity="0.22"/><rect x="982" y="82" width="1" height="2" fill="#e5c07b" fill-opacity="0.38"/><rect x="983" y="82" width="1" height="2" fill="#e5c07b" fill-opacity="0.38"/><rect x="984" y="82" width="1" height="2" fill="#e5c07b" fill-opacity="0.38"/><rect x="985" y="82" width="1" height="2" fill="#e5c07b" fill-opacity="0.22"/><rect x="986" y="82" width="1" height="2" fill="#e5c07b" fill-opacity="0.38"/><rect x="987" y="82" width="1" height="2" fill="#e5c07b" fill-opacity="0.38"/><rect x="988" y="82" width="1" height="2" fill="#e5c07b" fill-opacity="0.38"/><rect x="989" y="82" width="1" height="2" fill="#e5c07b" fill-opacity="0.38"/><rect x="990" y="82" width="1" height="2" fill="#e5c07b" fill-opacity="0.22"/><rect x="991" y="82" width="1" height="2" fill="#da70d6" fill-opacity="0.32"/><rect x="992" y="82" width="1" height="2" fill="#ffd700" fill-opacity="0.32"/><rect x="944" y="84" width="1" height="2" fill="#56b6c2" fill-opacity="0.38"/><rect x="945" y="84" width="1" height="2" fill="#56b6c2" fill-opacity="0.38"/><rect x="946" y="84" width="1" height="2" fill="#56b6c2" fill-opacity="0.38"/><rect x="947" y="84" width="1" height="2" fill="#56b6c2" fill-opacity="0.38"/><rect x="948" y="84" width="1" height="2" fill="#56b6c2" fill-opacity="0.38"/><rect x="950" y="84" width="1" height="2" fill="#61afef" fill-opacity="0.22"/><rect x="951" y="84" width="1" height="2" fill="#61afef" fill-opacity="0.38"/><rect x="952" y="84" width="1" height="2" fill="#61afef" fill-opacity="0.44"/><rect x="953" y="84" width="1" height="2" fill="#61afef" fill-opacity="0.38"/><rect x="954" y="84" width="1" height="2" fill="#61afef" fill-opacity="0.38"/><rect x="955" y="84" width="1" height="2" fill="#61afef" fill-opacity="0.38"/><rect x="956" y="84" width="1" height="2" fill="#61afef" fill-opacity="0.38"/><rect x="957" y="84" width="1" height="2" fill="#61afef" fill-opacity="0.38"/><rect x="959" y="84" width="1" height="2" fill="#e06c75" fill-opacity="0.32"/><rect x="961" y="84" width="1" height="2" fill="#98c379" fill-opacity="0.38"/><rect x="962" y="84" width="1" height="2" fill="#98c379" fill-opacity="0.38"/><rect x="963" y="84" width="1" height="2" fill="#98c379" fill-opacity="0.38"/><rect x="964" y="84" width="1" height="2" fill="#ffd700" fill-opacity="0.32"/><rect x="965" y="84" width="1" height="2" fill="#56b6c2" fill-opacity="0.38"/><rect x="966" y="84" width="1" height="2" fill="#56b6c2" fill-opacity="0.38"/><rect x="967" y="84" width="1" height="2" fill="#56b6c2" fill-opacity="0.38"/><rect x="968" y="84" width="1" height="2" fill="#56b6c2" fill-opacity="0.38"/><rect x="969" y="84" width="1" height="2" fill="#ffd700" fill-opacity="0.32"/><rect x="944" y="86" width="1" height="2" fill="#56b6c2" fill-opacity="0.38"/><rect x="945" y="86" width="1" height="2" fill="#56b6c2" fill-opacity="0.38"/><rect x="946" y="86" width="1" height="2" fill="#56b6c2" fill-opacity="0.38"/><rect x="947" y="86" width="1" height="2" fill="#56b6c2" fill-opacity="0.38"/><rect x="948" y="86" width="1" height="2" fill="#56b6c2" fill-opacity="0.38"/><rect x="950" y="86" width="1" height="2" fill="#61afef" fill-opacity="0.38"/><rect x="951" y="86" width="1" height="2" fill="#61afef" fill-opacity="0.38"/><rect x="952" y="86" width="1" height="2" fill="#61afef" fill-opacity="0.5"/><rect x="953" y="86" width="1" height="2" fill="#61afef" fill-opacity="0.44"/><rect x="954" y="86" width="1" height="2" fill="#61afef" fill-opacity="0.38"/><rect x="956" y="86" width="1" height="2" fill="#e06c75" fill-opacity="0.32"/><rect x="958" y="86" width="1" height="2" fill="#98c379" fill-opacity="0.38"/><rect x="959" y="86" width="1" height="2" fill="#98c379" fill-opacity="0.38"/><rect x="960" y="86" width="1" height="2" fill="#98c379" fill-opacity="0.38"/><rect x="961" y="86" width="1" height="2" fill="#ffd700" fill-opacity="0.32"/><rect x="962" y="86" width="1" height="2" fill="#ffd700" fill-opacity="0.32"/><rect x="944" y="90" width="1" height="2" fill="#56b6c2" fill-opacity="0.38"/><rect x="945" y="90" width="1" height="2" fill="#56b6c2" fill-opacity="0.38"/><rect x="946" y="90" width="1" height="2" fill="#56b6c2" fill-opacity="0.38"/><rect x="947" y="90" width="1" height="2" fill="#56b6c2" fill-opacity="0.38"/><rect x="948" y="90" width="1" height="2" fill="#56b6c2" fill-opacity="0.38"/><rect x="950" y="90" width="1" height="2" fill="#ffd700" fill-opacity="0.32"/><rect x="951" y="90" width="1" height="2" fill="#61afef" fill-opacity="0.38"/><rect x="952" y="90" width="1" height="2" fill="#61afef" fill-opacity="0.38"/><rect x="953" y="90" width="1" height="2" fill="#61afef" fill-opacity="0.38"/><rect x="954" y="90" width="1" height="2" fill="#61afef" fill-opacity="0.22"/><rect x="955" y="90" width="1" height="2" fill="#61afef" fill-opacity="0.38"/><rect x="956" y="90" width="1" height="2" fill="#61afef" fill-opacity="0.38"/><rect x="957" y="90" width="1" height="2" fill="#61afef" fill-opacity="0.38"/><rect x="958" y="90" width="1" height="2" fill="#61afef" fill-opacity="0.38"/><rect x="959" y="90" width="1" height="2" fill="#61afef" fill-opacity="0.44"/><rect x="960" y="90" width="1" height="2" fill="#61afef" fill-opacity="0.38"/><rect x="961" y="90" width="1" height="2" fill="#61afef" fill-opacity="0.38"/><rect x="962" y="90" width="1" height="2" fill="#61afef" fill-opacity="0.5"/><rect x="963" y="90" width="1" height="2" fill="#d7dae0" fill-opacity="0.22"/><rect x="965" y="90" width="1" height="2" fill="#da70d6" fill-opacity="0.32"/><rect x="967" y="90" width="1" height="2" fill="#61afef" fill-opacity="0.38"/><rect x="968" y="90" width="1" height="2" fill="#61afef" fill-opacity="0.38"/><rect x="969" y="90" width="1" height="2" fill="#61afef" fill-opacity="0.38"/><rect x="970" y="90" width="1" height="2" fill="#61afef" fill-opacity="0.44"/><rect x="971" y="90" width="1" height="2" fill="#61afef" fill-opacity="0.22"/><rect x="972" y="90" width="1" height="2" fill="#61afef" fill-opacity="0.38"/><rect x="973" y="90" width="1" height="2" fill="#61afef" fill-opacity="0.22"/><rect x="974" y="90" width="1" height="2" fill="#61afef" fill-opacity="0.38"/><rect x="975" y="90" width="1" height="2" fill="#61afef" fill-opacity="0.38"/><rect x="976" y="90" width="1" height="2" fill="#61afef" fill-opacity="0.44"/><rect x="977" y="90" width="1" height="2" fill="#61afef" fill-opacity="0.38"/><rect x="978" y="90" width="1" height="2" fill="#61afef" fill-opacity="0.22"/><rect x="979" y="90" width="1" height="2" fill="#61afef" fill-opacity="0.38"/><rect x="980" y="90" width="1" height="2" fill="#61afef" fill-opacity="0.38"/><rect x="981" y="90" width="1" height="2" fill="#d7dae0" fill-opacity="0.22"/><rect x="983" y="90" width="1" height="2" fill="#61afef" fill-opacity="0.38"/><rect x="984" y="90" width="1" height="2" fill="#61afef" fill-opacity="0.38"/><rect x="985" y="90" width="1" height="2" fill="#61afef" fill-opacity="0.38"/><rect x="986" y="90" width="1" height="2" fill="#61afef" fill-opacity="0.38"/><rect x="987" y="90" width="1" height="2" fill="#61afef" fill-opacity="0.38"/><rect x="988" y="90" width="1" height="2" fill="#61afef" fill-opacity="0.44"/><rect x="989" y="90" width="1" height="2" fill="#61afef" fill-opacity="0.22"/><rect x="990" y="90" width="1" height="2" fill="#61afef" fill-opacity="0.38"/><rect x="991" y="90" width="1" height="2" fill="#61afef" fill-opacity="0.22"/><rect x="992" y="90" width="1" height="2" fill="#61afef" fill-opacity="0.38"/><rect x="993" y="90" width="1" height="2" fill="#61afef" fill-opacity="0.38"/><rect x="994" y="90" width="1" height="2" fill="#d7dae0" fill-opacity="0.22"/><rect x="996" y="90" width="1" height="2" fill="#61afef" fill-opacity="0.38"/><rect x="997" y="90" width="1" height="2" fill="#61afef" fill-opacity="0.38"/><rect x="998" y="90" width="1" height="2" fill="#61afef" fill-opacity="0.22"/><rect x="999" y="90" width="1" height="2" fill="#61afef" fill-opacity="0.22"/><rect x="1000" y="90" width="1" height="2" fill="#61afef" fill-opacity="0.38"/><rect x="1001" y="90" width="1" height="2" fill="#61afef" fill-opacity="0.38"/><rect x="1002" y="90" width="1" height="2" fill="#61afef" fill-opacity="0.38"/><rect x="1003" y="90" width="1" height="2" fill="#61afef" fill-opacity="0.38"/><rect x="1005" y="90" width="1" height="2" fill="#da70d6" fill-opacity="0.32"/><rect x="1006" y="90" width="1" height="2" fill="#ffd700" fill-opacity="0.32"/><rect x="1008" y="90" width="1" height="2" fill="#e06c75" fill-opacity="0.32"/><rect x="1010" y="90" width="1" height="2" fill="#98c379" fill-opacity="0.38"/><rect x="1011" y="90" width="1" height="2" fill="#98c379" fill-opacity="0.38"/><rect x="1012" y="90" width="1" height="2" fill="#98c379" fill-opacity="0.38"/><rect x="1013" y="90" width="1" height="2" fill="#98c379" fill-opacity="0.44"/><rect x="1014" y="90" width="1" height="2" fill="#98c379" fill-opacity="0.38"/><rect x="1015" y="90" width="1" height="2" fill="#98c379" fill-opacity="0.38"/><rect x="1016" y="90" width="1" height="2" fill="#98c379" fill-opacity="0.5"/><rect x="1017" y="90" width="1" height="2" fill="#ffd700" fill-opacity="0.32"/><rect x="1018" y="90" width="1" height="2" fill="#da70d6" fill-opacity="0.32"/><rect x="946" y="92" width="1" height="2" fill="#d7dae0" fill-opacity="0.22"/><rect x="947" y="92" width="1" height="2" fill="#d7dae0" fill-opacity="0.38"/><rect x="948" y="92" width="1" height="2" fill="#d7dae0" fill-opacity="0.38"/><rect x="949" y="92" width="1" height="2" fill="#d7dae0" fill-opacity="0.38"/><rect x="950" y="92" width="1" height="2" fill="#d7dae0" fill-opacity="0.22"/><rect x="951" y="92" width="1" height="2" fill="#d7dae0" fill-opacity="0.5"/><rect x="952" y="92" width="1" height="2" fill="#d7dae0" fill-opacity="0.22"/><rect x="953" y="92" width="1" height="2" fill="#d7dae0" fill-opacity="0.38"/><rect x="954" y="92" width="1" height="2" fill="#d7dae0" fill-opacity="0.38"/><rect x="955" y="92" width="1" height="2" fill="#d7dae0" fill-opacity="0.38"/><rect x="956" y="92" width="1" height="2" fill="#d7dae0" fill-opacity="0.22"/><rect x="958" y="92" width="1" height="2" fill="#c678dd" fill-opacity="0.38"/><rect x="959" y="92" width="1" height="2" fill="#c678dd" fill-opacity="0.38"/><rect x="960" y="92" width="1" height="2" fill="#c678dd" fill-opacity="0.38"/><rect x="961" y="92" width="1" height="2" fill="#d7dae0" fill-opacity="0.22"/><rect x="946" y="94" width="1" height="2" fill="#d7dae0" fill-opacity="0.38"/><rect x="947" y="94" width="1" height="2" fill="#d7dae0" fill-opacity="0.38"/><rect x="948" y="94" width="1" height="2" fill="#d7dae0" fill-opacity="0.38"/><rect x="949" y="94" width="1" height="2" fill="#d7dae0" fill-opacity="0.38"/><rect x="950" y="94" width="1" height="2" fill="#d7dae0" fill-opacity="0.44"/><rect x="951" y="94" width="1" height="2" fill="#d7dae0" fill-opacity="0.38"/><rect x="952" y="94" width="1" height="2" fill="#d7dae0" fill-opacity="0.22"/><rect x="953" y="94" width="1" height="2" fill="#d7dae0" fill-opacity="0.44"/><rect x="954" y="94" width="1" height="2" fill="#d7dae0" fill-opacity="0.38"/><rect x="955" y="94" width="1" height="2" fill="#d7dae0" fill-opacity="0.38"/><rect x="956" y="94" width="1" height="2" fill="#d7dae0" fill-opacity="0.38"/><rect x="957" y="94" width="1" height="2" fill="#d7dae0" fill-opacity="0.38"/><rect x="958" y="94" width="1" height="2" fill="#d7dae0" fill-opacity="0.22"/><rect x="960" y="94" width="1" height="2" fill="#179fff" fill-opacity="0.32"/><rect x="962" y="94" width="1" height="2" fill="#d7dae0" fill-opacity="0.38"/><rect x="963" y="94" width="1" height="2" fill="#d7dae0" fill-opacity="0.38"/><rect x="964" y="94" width="1" height="2" fill="#d7dae0" fill-opacity="0.38"/><rect x="965" y="94" width="1" height="2" fill="#d7dae0" fill-opacity="0.38"/><rect x="966" y="94" width="1" height="2" fill="#d7dae0" fill-opacity="0.22"/><rect x="968" y="94" width="1" height="2" fill="#c678dd" fill-opacity="0.38"/><rect x="969" y="94" width="1" height="2" fill="#c678dd" fill-opacity="0.38"/><rect x="971" y="94" width="1" height="2" fill="#179fff" fill-opacity="0.32"/><rect x="972" y="94" width="1" height="2" fill="#d7dae0" fill-opacity="0.22"/><rect x="946" y="96" width="1" height="2" fill="#d7dae0" fill-opacity="0.38"/><rect x="947" y="96" width="1" height="2" fill="#d7dae0" fill-opacity="0.38"/><rect x="948" y="96" width="1" height="2" fill="#d7dae0" fill-opacity="0.38"/><rect x="949" y="96" width="1" height="2" fill="#d7dae0" fill-opacity="0.38"/><rect x="950" y="96" width="1" height="2" fill="#d7dae0" fill-opacity="0.5"/><rect x="951" y="96" width="1" height="2" fill="#d7dae0" fill-opacity="0.38"/><rect x="952" y="96" width="1" height="2" fill="#d7dae0" fill-opacity="0.38"/><rect x="953" y="96" width="1" height="2" fill="#d7dae0" fill-opacity="0.22"/><rect x="955" y="96" width="1" height="2" fill="#d7dae0" fill-opacity="0.38"/><rect x="956" y="96" width="1" height="2" fill="#d7dae0" fill-opacity="0.38"/><rect x="957" y="96" width="1" height="2" fill="#d7dae0" fill-opacity="0.38"/><rect x="958" y="96" width="1" height="2" fill="#d7dae0" fill-opacity="0.5"/><rect x="959" y="96" width="1" height="2" fill="#d7dae0" fill-opacity="0.44"/><rect x="960" y="96" width="1" height="2" fill="#d7dae0" fill-opacity="0.38"/><rect x="961" y="96" width="1" height="2" fill="#d7dae0" fill-opacity="0.38"/><rect x="962" y="96" width="1" height="2" fill="#d7dae0" fill-opacity="0.38"/><rect x="963" y="96" width="1" height="2" fill="#d7dae0" fill-opacity="0.5"/><rect x="964" y="96" width="1" height="2" fill="#d7dae0" fill-opacity="0.38"/><rect x="965" y="96" width="1" height="2" fill="#d7dae0" fill-opacity="0.22"/><rect x="946" y="98" width="1" height="2" fill="#d7dae0" fill-opacity="0.38"/><rect x="947" y="98" width="1" height="2" fill="#d7dae0" fill-opacity="0.38"/><rect x="948" y="98" width="1" height="2" fill="#d7dae0" fill-opacity="0.38"/><rect x="949" y="98" width="1" height="2" fill="#d7dae0" fill-opacity="0.5"/><rect x="950" y="98" width="1" height="2" fill="#d7dae0" fill-opacity="0.44"/><rect x="951" y="98" width="1" height="2" fill="#d7dae0" fill-opacity="0.38"/><rect x="952" y="98" width="1" height="2" fill="#d7dae0" fill-opacity="0.38"/><rect x="953" y="98" width="1" height="2" fill="#d7dae0" fill-opacity="0.22"/><rect x="954" y="98" width="1" height="2" fill="#d7dae0" fill-opacity="0.38"/><rect x="955" y="98" width="1" height="2" fill="#d7dae0" fill-opacity="0.38"/><rect x="956" y="98" width="1" height="2" fill="#d7dae0" fill-opacity="0.5"/><rect x="957" y="98" width="1" height="2" fill="#d7dae0" fill-opacity="0.38"/><rect x="958" y="98" width="1" height="2" fill="#d7dae0" fill-opacity="0.38"/><rect x="959" y="98" width="1" height="2" fill="#d7dae0" fill-opacity="0.38"/><rect x="960" y="98" width="1" height="2" fill="#d7dae0" fill-opacity="0.38"/><rect x="961" y="98" width="1" height="2" fill="#d7dae0" fill-opacity="0.38"/><rect x="962" y="98" width="1" height="2" fill="#d7dae0" fill-opacity="0.5"/><rect x="963" y="98" width="1" height="2" fill="#d7dae0" fill-opacity="0.38"/><rect x="964" y="98" width="1" height="2" fill="#d7dae0" fill-opacity="0.38"/><rect x="965" y="98" width="1" height="2" fill="#d7dae0" fill-opacity="0.38"/><rect x="966" y="98" width="1" height="2" fill="#d7dae0" fill-opacity="0.38"/><rect x="967" y="98" width="1" height="2" fill="#d7dae0" fill-opacity="0.22"/><rect x="969" y="98" width="1" height="2" fill="#56b6c2" fill-opacity="0.38"/><rect x="970" y="98" width="1" height="2" fill="#56b6c2" fill-opacity="0.38"/><rect x="971" y="98" width="1" height="2" fill="#56b6c2" fill-opacity="0.22"/><rect x="972" y="98" width="1" height="2" fill="#56b6c2" fill-opacity="0.38"/><rect x="973" y="98" width="1" height="2" fill="#56b6c2" fill-opacity="0.38"/><rect x="974" y="98" width="1" height="2" fill="#d7dae0" fill-opacity="0.22"/><rect x="946" y="100" width="1" height="2" fill="#d7dae0" fill-opacity="0.38"/><rect x="947" y="100" width="1" height="2" fill="#d7dae0" fill-opacity="0.38"/><rect x="948" y="100" width="1" height="2" fill="#d7dae0" fill-opacity="0.38"/><rect x="949" y="100" width="1" height="2" fill="#d7dae0" fill-opacity="0.22"/><rect x="950" y="100" width="1" height="2" fill="#d7dae0" fill-opacity="0.38"/><rect x="951" y="100" width="1" height="2" fill="#d7dae0" fill-opacity="0.38"/><rect x="952" y="100" width="1" height="2" fill="#d7dae0" fill-opacity="0.44"/><rect x="953" y="100" width="1" height="2" fill="#d7dae0" fill-opacity="0.38"/><rect x="954" y="100" width="1" height="2" fill="#d7dae0" fill-opacity="0.22"/><rect x="955" y="100" width="1" height="2" fill="#d7dae0" fill-opacity="0.5"/><rect x="956" y="100" width="1" height="2" fill="#d7dae0" fill-opacity="0.38"/><rect x="957" y="100" width="1" height="2" fill="#d7dae0" fill-opacity="0.38"/><rect x="958" y="100" width="1" height="2" fill="#d7dae0" fill-opacity="0.22"/><rect x="959" y="100" width="1" height="2" fill="#d7dae0" fill-opacity="0.38"/><rect x="960" y="100" width="1" height="2" fill="#d7dae0" fill-opacity="0.38"/><rect x="961" y="100" width="1" height="2" fill="#d7dae0" fill-opacity="0.38"/><rect x="962" y="100" width="1" height="2" fill="#d7dae0" fill-opacity="0.22"/><rect x="964" y="100" width="1" height="2" fill="#179fff" fill-opacity="0.32"/><rect x="948" y="102" width="1" height="2" fill="#d7dae0" fill-opacity="0.38"/><rect x="949" y="102" width="1" height="2" fill="#d7dae0" fill-opacity="0.38"/><rect x="950" y="102" width="1" height="2" fill="#d7dae0" fill-opacity="0.38"/><rect x="951" y="102" width="1" height="2" fill="#d7dae0" fill-opacity="0.38"/><rect x="952" y="102" width="1" height="2" fill="#d7dae0" fill-opacity="0.22"/><rect x="954" y="102" width="1" height="2" fill="#c678dd" fill-opacity="0.38"/><rect x="955" y="102" width="1" height="2" fill="#c678dd" fill-opacity="0.38"/><rect x="946" y="104" width="1" height="2" fill="#179fff" fill-opacity="0.32"/><rect x="944" y="106" width="1" height="2" fill="#da70d6" fill-opacity="0.32"/><rect x="945" y="106" width="1" height="2" fill="#ffd700" fill-opacity="0.32"/><rect x="944" y="110" width="1" height="2" fill="#56b6c2" fill-opacity="0.38"/><rect x="945" y="110" width="1" height="2" fill="#56b6c2" fill-opacity="0.38"/><rect x="946" y="110" width="1" height="2" fill="#56b6c2" fill-opacity="0.38"/><rect x="947" y="110" width="1" height="2" fill="#56b6c2" fill-opacity="0.38"/><rect x="948" y="110" width="1" height="2" fill="#56b6c2" fill-opacity="0.38"/><rect x="950" y="110" width="1" height="2" fill="#ffd700" fill-opacity="0.32"/><rect x="951" y="110" width="1" height="2" fill="#61afef" fill-opacity="0.38"/><rect x="952" y="110" width="1" height="2" fill="#61afef" fill-opacity="0.38"/><rect x="953" y="110" width="1" height="2" fill="#61afef" fill-opacity="0.38"/><rect x="954" y="110" width="1" height="2" fill="#61afef" fill-opacity="0.22"/><rect x="955" y="110" width="1" height="2" fill="#61afef" fill-opacity="0.38"/><rect x="956" y="110" width="1" height="2" fill="#61afef" fill-opacity="0.38"/><rect x="957" y="110" width="1" height="2" fill="#61afef" fill-opacity="0.38"/><rect x="958" y="110" width="1" height="2" fill="#61afef" fill-opacity="0.38"/><rect x="959" y="110" width="1" height="2" fill="#61afef" fill-opacity="0.5"/><rect x="960" y="110" width="1" height="2" fill="#61afef" fill-opacity="0.38"/><rect x="961" y="110" width="1" height="2" fill="#61afef" fill-opacity="0.38"/><rect x="962" y="110" width="1" height="2" fill="#61afef" fill-opacity="0.38"/><rect x="963" y="110" width="1" height="2" fill="#61afef" fill-opacity="0.22"/><rect x="964" y="110" width="1" height="2" fill="#d7dae0" fill-opacity="0.22"/><rect x="966" y="110" width="1" height="2" fill="#da70d6" fill-opacity="0.32"/><rect x="968" y="110" width="1" height="2" fill="#61afef" fill-opacity="0.38"/><rect x="969" y="110" width="1" height="2" fill="#61afef" fill-opacity="0.38"/><rect x="970" y="110" width="1" height="2" fill="#61afef" fill-opacity="0.38"/><rect x="971" y="110" width="1" height="2" fill="#61afef" fill-opacity="0.5"/><rect x="972" y="110" width="1" height="2" fill="#61afef" fill-opacity="0.38"/><rect x="973" y="110" width="1" height="2" fill="#61afef" fill-opacity="0.38"/><rect x="974" y="110" width="1" height="2" fill="#61afef" fill-opacity="0.38"/><rect x="975" y="110" width="1" height="2" fill="#61afef" fill-opacity="0.22"/><rect x="976" y="110" width="1" height="2" fill="#61afef" fill-opacity="0.44"/><rect x="977" y="110" width="1" height="2" fill="#61afef" fill-opacity="0.38"/><rect x="978" y="110" width="1" height="2" fill="#61afef" fill-opacity="0.38"/><rect x="979" y="110" width="1" height="2" fill="#61afef" fill-opacity="0.38"/><rect x="980" y="110" width="1" height="2" fill="#61afef" fill-opacity="0.38"/><rect x="981" y="110" width="1" height="2" fill="#d7dae0" fill-opacity="0.22"/><rect x="983" y="110" width="1" height="2" fill="#61afef" fill-opacity="0.38"/><rect x="984" y="110" width="1" height="2" fill="#61afef" fill-opacity="0.22"/><rect x="985" y="110" width="1" height="2" fill="#61afef" fill-opacity="0.38"/><rect x="986" y="110" width="1" height="2" fill="#61afef" fill-opacity="0.38"/><rect x="987" y="110" width="1" height="2" fill="#61afef" fill-opacity="0.38"/><rect x="988" y="110" width="1" height="2" fill="#61afef" fill-opacity="0.5"/><rect x="989" y="110" width="1" height="2" fill="#61afef" fill-opacity="0.38"/><rect x="990" y="110" width="1" height="2" fill="#61afef" fill-opacity="0.38"/><rect x="991" y="110" width="1" height="2" fill="#61afef" fill-opacity="0.38"/><rect x="992" y="110" width="1" height="2" fill="#61afef" fill-opacity="0.22"/><rect x="994" y="110" width="1" height="2" fill="#da70d6" fill-opacity="0.32"/><rect x="995" y="110" width="1" height="2" fill="#ffd700" fill-opacity="0.32"/><rect x="997" y="110" width="1" height="2" fill="#e06c75" fill-opacity="0.32"/><rect x="999" y="110" width="1" height="2" fill="#98c379" fill-opacity="0.38"/><rect x="1000" y="110" width="1" height="2" fill="#98c379" fill-opacity="0.38"/><rect x="1001" y="110" width="1" height="2" fill="#98c379" fill-opacity="0.38"/><rect x="1002" y="110" width="1" height="2" fill="#98c379" fill-opacity="0.5"/><rect x="1003" y="110" width="1" height="2" fill="#98c379" fill-opacity="0.38"/><rect x="1004" y="110" width="1" height="2" fill="#98c379" fill-opacity="0.38"/><rect x="1005" y="110" width="1" height="2" fill="#98c379" fill-opacity="0.38"/><rect x="1006" y="110" width="1" height="2" fill="#98c379" fill-opacity="0.22"/><rect x="1007" y="110" width="1" height="2" fill="#98c379" fill-opacity="0.44"/><rect x="1008" y="110" width="1" height="2" fill="#98c379" fill-opacity="0.38"/><rect x="1009" y="110" width="1" height="2" fill="#98c379" fill-opacity="0.38"/><rect x="1010" y="110" width="1" height="2" fill="#98c379" fill-opacity="0.38"/><rect x="1011" y="110" width="1" height="2" fill="#98c379" fill-opacity="0.38"/><rect x="1012" y="110" width="1" height="2" fill="#ffd700" fill-opacity="0.32"/><rect x="1013" y="110" width="1" height="2" fill="#e06c75" fill-opacity="0.38"/><rect x="1014" y="110" width="1" height="2" fill="#e06c75" fill-opacity="0.38"/><rect x="1015" y="110" width="1" height="2" fill="#e06c75" fill-opacity="0.38"/><rect x="1016" y="110" width="1" height="2" fill="#e06c75" fill-opacity="0.38"/><rect x="1017" y="110" width="1" height="2" fill="#e06c75" fill-opacity="0.38"/><rect x="1019" y="110" width="1" height="2" fill="#da70d6" fill-opacity="0.32"/><rect x="1020" y="110" width="1" height="2" fill="#d19a66" fill-opacity="0.38"/><rect x="1021" y="110" width="1" height="2" fill="#d19a66" fill-opacity="0.38"/><rect x="1022" y="110" width="1" height="2" fill="#d19a66" fill-opacity="0.38"/><rect x="1023" y="110" width="1" height="2" fill="#d19a66" fill-opacity="0.38"/><rect x="1024" y="110" width="1" height="2" fill="#da70d6" fill-opacity="0.32"/><rect x="1026" y="110" width="1" height="2" fill="#56b6c2" fill-opacity="0.32"/><rect x="1027" y="110" width="1" height="2" fill="#56b6c2" fill-opacity="0.32"/><rect x="1029" y="110" width="1" height="2" fill="#da70d6" fill-opacity="0.32"/><rect x="946" y="112" width="1" height="2" fill="#98c379" fill-opacity="0.38"/><rect x="947" y="112" width="1" height="2" fill="#98c379" fill-opacity="0.38"/><rect x="948" y="112" width="1" height="2" fill="#98c379" fill-opacity="0.38"/><rect x="949" y="112" width="1" height="2" fill="#98c379" fill-opacity="0.38"/><rect x="950" y="112" width="1" height="2" fill="#98c379" fill-opacity="0.38"/><rect x="951" y="112" width="1" height="2" fill="#98c379" fill-opacity="0.44"/><rect x="952" y="112" width="1" height="2" fill="#98c379" fill-opacity="0.22"/><rect x="953" y="112" width="1" height="2" fill="#98c379" fill-opacity="0.38"/><rect x="954" y="112" width="1" height="2" fill="#98c379" fill-opacity="0.22"/><rect x="955" y="112" width="1" height="2" fill="#98c379" fill-opacity="0.38"/><rect x="956" y="112" width="1" height="2" fill="#98c379" fill-opacity="0.38"/><rect x="957" y="112" width="1" height="2" fill="#179fff" fill-opacity="0.32"/><rect x="958" y="112" width="1" height="2" fill="#179fff" fill-opacity="0.32"/><rect x="946" y="114" width="1" height="2" fill="#98c379" fill-opacity="0.38"/><rect x="947" y="114" width="1" height="2" fill="#98c379" fill-opacity="0.38"/><rect x="948" y="114" width="1" height="2" fill="#98c379" fill-opacity="0.38"/><rect x="949" y="114" width="1" height="2" fill="#98c379" fill-opacity="0.5"/><rect x="950" y="114" width="1" height="2" fill="#98c379" fill-opacity="0.38"/><rect x="951" y="114" width="1" height="2" fill="#98c379" fill-opacity="0.38"/><rect x="952" y="114" width="1" height="2" fill="#98c379" fill-opacity="0.38"/><rect x="953" y="114" width="1" height="2" fill="#98c379" fill-opacity="0.22"/><rect x="954" y="114" width="1" height="2" fill="#98c379" fill-opacity="0.44"/><rect x="955" y="114" width="1" height="2" fill="#98c379" fill-opacity="0.38"/><rect x="956" y="114" width="1" height="2" fill="#98c379" fill-opacity="0.38"/><rect x="957" y="114" width="1" height="2" fill="#98c379" fill-opacity="0.38"/><rect x="958" y="114" width="1" height="2" fill="#98c379" fill-opacity="0.38"/><rect x="959" y="114" width="1" height="2" fill="#179fff" fill-opacity="0.32"/><rect x="960" y="114" width="1" height="2" fill="#ffd700" fill-opacity="0.32"/><rect x="962" y="114" width="1" height="2" fill="#d7dae0" fill-opacity="0.38"/><rect x="963" y="114" width="1" height="2" fill="#d7dae0" fill-opacity="0.38"/><rect x="964" y="114" width="1" height="2" fill="#d7dae0" fill-opacity="0.38"/><rect x="965" y="114" width="1" height="2" fill="#d7dae0" fill-opacity="0.38"/><rect x="966" y="114" width="1" height="2" fill="#d7dae0" fill-opacity="0.22"/><rect x="967" y="114" width="1" height="2" fill="#d7dae0" fill-opacity="0.38"/><rect x="968" y="114" width="1" height="2" fill="#d7dae0" fill-opacity="0.5"/><rect x="969" y="114" width="1" height="2" fill="#d7dae0" fill-opacity="0.44"/><rect x="970" y="114" width="1" height="2" fill="#d7dae0" fill-opacity="0.38"/><rect x="971" y="114" width="1" height="2" fill="#d7dae0" fill-opacity="0.38"/><rect x="972" y="114" width="1" height="2" fill="#d7dae0" fill-opacity="0.38"/><rect x="973" y="114" width="1" height="2" fill="#d7dae0" fill-opacity="0.22"/><rect x="974" y="114" width="1" height="2" fill="#d7dae0" fill-opacity="0.38"/><rect x="975" y="114" width="1" height="2" fill="#d7dae0" fill-opacity="0.38"/><rect x="976" y="114" width="1" height="2" fill="#d7dae0" fill-opacity="0.22"/><rect x="978" y="114" width="1" height="2" fill="#56b6c2" fill-opacity="0.38"/><rect x="979" y="114" width="1" height="2" fill="#56b6c2" fill-opacity="0.38"/><rect x="980" y="114" width="1" height="2" fill="#56b6c2" fill-opacity="0.22"/><rect x="981" y="114" width="1" height="2" fill="#56b6c2" fill-opacity="0.38"/><rect x="982" y="114" width="1" height="2" fill="#56b6c2" fill-opacity="0.38"/><rect x="984" y="114" width="1" height="2" fill="#ffd700" fill-opacity="0.32"/><rect x="985" y="114" width="1" height="2" fill="#179fff" fill-opacity="0.32"/><rect x="946" y="116" width="1" height="2" fill="#61afef" fill-opacity="0.22"/><rect x="947" y="116" width="1" height="2" fill="#61afef" fill-opacity="0.38"/><rect x="948" y="116" width="1" height="2" fill="#61afef" fill-opacity="0.44"/><rect x="949" y="116" width="1" height="2" fill="#61afef" fill-opacity="0.38"/><rect x="950" y="116" width="1" height="2" fill="#61afef" fill-opacity="0.38"/><rect x="951" y="116" width="1" height="2" fill="#61afef" fill-opacity="0.38"/><rect x="952" y="116" width="1" height="2" fill="#61afef" fill-opacity="0.38"/><rect x="953" y="116" width="1" height="2" fill="#61afef" fill-opacity="0.38"/><rect x="954" y="116" width="1" height="2" fill="#d7dae0" fill-opacity="0.22"/><rect x="955" y="116" width="1" height="2" fill="#d7dae0" fill-opacity="0.38"/><rect x="956" y="116" width="1" height="2" fill="#d7dae0" fill-opacity="0.38"/><rect x="957" y="116" width="1" height="2" fill="#d7dae0" fill-opacity="0.22"/><rect x="958" y="116" width="1" height="2" fill="#d7dae0" fill-opacity="0.38"/><rect x="959" y="116" width="1" height="2" fill="#d7dae0" fill-opacity="0.38"/><rect x="961" y="116" width="1" height="2" fill="#e06c75" fill-opacity="0.32"/><rect x="963" y="116" width="1" height="2" fill="#e06c75" fill-opacity="0.22"/><rect x="964" y="116" width="1" height="2" fill="#e06c75" fill-opacity="0.22"/><rect x="965" y="116" width="1" height="2" fill="#61afef" fill-opacity="0.38"/><rect x="966" y="116" width="1" height="2" fill="#61afef" fill-opacity="0.38"/><rect x="967" y="116" width="1" height="2" fill="#61afef" fill-opacity="0.38"/><rect x="968" y="116" width="1" height="2" fill="#61afef" fill-opacity="0.38"/><rect x="969" y="116" width="1" height="2" fill="#d7dae0" fill-opacity="0.38"/><rect x="970" y="116" width="1" height="2" fill="#d7dae0" fill-opacity="0.22"/><rect x="971" y="116" width="1" height="2" fill="#d7dae0" fill-opacity="0.22"/><rect x="972" y="116" width="1" height="2" fill="#d7dae0" fill-opacity="0.38"/><rect x="973" y="116" width="1" height="2" fill="#d7dae0" fill-opacity="0.44"/><rect x="974" y="116" width="1" height="2" fill="#d7dae0" fill-opacity="0.38"/><rect x="975" y="116" width="1" height="2" fill="#d7dae0" fill-opacity="0.38"/><rect x="976" y="116" width="1" height="2" fill="#d7dae0" fill-opacity="0.38"/><rect x="977" y="116" width="1" height="2" fill="#d7dae0" fill-opacity="0.38"/><rect x="978" y="116" width="1" height="2" fill="#d7dae0" fill-opacity="0.38"/><rect x="946" y="120" width="1" height="2" fill="#e06c75" fill-opacity="0.22"/><rect x="947" y="120" width="1" height="2" fill="#e06c75" fill-opacity="0.38"/><rect x="949" y="120" width="1" height="2" fill="#179fff" fill-opacity="0.32"/><rect x="950" y="120" width="1" height="2" fill="#98c379" fill-opacity="0.38"/><rect x="951" y="120" width="1" height="2" fill="#98c379" fill-opacity="0.38"/><rect x="952" y="120" width="1" height="2" fill="#98c379" fill-opacity="0.38"/><rect x="953" y="120" width="1" height="2" fill="#98c379" fill-opacity="0.38"/><rect x="954" y="120" width="1" height="2" fill="#98c379" fill-opacity="0.38"/><rect x="955" y="120" width="1" height="2" fill="#ffd700" fill-opacity="0.32"/><rect x="956" y="120" width="1" height="2" fill="#d7dae0" fill-opacity="0.22"/><rect x="957" y="120" width="1" height="2" fill="#d7dae0" fill-opacity="0.38"/><rect x="958" y="120" width="1" height="2" fill="#d7dae0" fill-opacity="0.44"/><rect x="959" y="120" width="1" height="2" fill="#d7dae0" fill-opacity="0.38"/><rect x="960" y="120" width="1" height="2" fill="#d7dae0" fill-opacity="0.38"/><rect x="961" y="120" width="1" height="2" fill="#d7dae0" fill-opacity="0.38"/><rect x="962" y="120" width="1" height="2" fill="#d7dae0" fill-opacity="0.38"/><rect x="963" y="120" width="1" height="2" fill="#d7dae0" fill-opacity="0.38"/><rect x="964" y="120" width="1" height="2" fill="#ffd700" fill-opacity="0.32"/><rect x="965" y="120" width="1" height="2" fill="#179fff" fill-opacity="0.32"/><rect x="967" y="120" width="1" height="2" fill="#179fff" fill-opacity="0.32"/><rect x="948" y="122" width="1" height="2" fill="#56b6c2" fill-opacity="0.38"/><rect x="949" y="122" width="1" height="2" fill="#56b6c2" fill-opacity="0.38"/><rect x="950" y="122" width="1" height="2" fill="#56b6c2" fill-opacity="0.38"/><rect x="951" y="122" width="1" height="2" fill="#56b6c2" fill-opacity="0.38"/><rect x="952" y="122" width="1" height="2" fill="#56b6c2" fill-opacity="0.38"/><rect x="954" y="122" width="1" height="2" fill="#61afef" fill-opacity="0.38"/><rect x="955" y="122" width="1" height="2" fill="#61afef" fill-opacity="0.38"/><rect x="956" y="122" width="1" height="2" fill="#61afef" fill-opacity="0.38"/><rect x="958" y="122" width="1" height="2" fill="#e06c75" fill-opacity="0.32"/><rect x="960" y="122" width="1" height="2" fill="#e06c75" fill-opacity="0.38"/><rect x="961" y="122" width="1" height="2" fill="#e06c75" fill-opacity="0.5"/><rect x="962" y="122" width="1" height="2" fill="#e06c75" fill-opacity="0.38"/><rect x="963" y="122" width="1" height="2" fill="#e06c75" fill-opacity="0.22"/><rect x="964" y="122" width="1" height="2" fill="#e06c75" fill-opacity="0.38"/><rect x="966" y="122" width="1" height="2" fill="#98c379" fill-opacity="0.38"/><rect x="967" y="122" width="1" height="2" fill="#98c379" fill-opacity="0.38"/><rect x="968" y="122" width="1" height="2" fill="#98c379" fill-opacity="0.38"/><rect x="969" y="122" width="1" height="2" fill="#98c379" fill-opacity="0.44"/><rect x="970" y="122" width="1" height="2" fill="#98c379" fill-opacity="0.38"/><rect x="971" y="122" width="1" height="2" fill="#98c379" fill-opacity="0.38"/><rect x="972" y="122" width="1" height="2" fill="#98c379" fill-opacity="0.38"/><rect x="973" y="122" width="1" height="2" fill="#98c379" fill-opacity="0.44"/><rect x="974" y="122" width="1" height="2" fill="#98c379" fill-opacity="0.38"/><rect x="975" y="122" width="1" height="2" fill="#98c379" fill-opacity="0.22"/><rect x="976" y="122" width="1" height="2" fill="#ffd700" fill-opacity="0.32"/><rect x="977" y="122" width="1" height="2" fill="#61afef" fill-opacity="0.38"/><rect x="978" y="122" width="1" height="2" fill="#61afef" fill-opacity="0.38"/><rect x="979" y="122" width="1" height="2" fill="#61afef" fill-opacity="0.38"/><rect x="980" y="122" width="1" height="2" fill="#61afef" fill-opacity="0.38"/><rect x="981" y="122" width="1" height="2" fill="#d7dae0" fill-opacity="0.22"/><rect x="982" y="122" width="1" height="2" fill="#61afef" fill-opacity="0.38"/><rect x="983" y="122" width="1" height="2" fill="#61afef" fill-opacity="0.38"/><rect x="984" y="122" width="1" height="2" fill="#61afef" fill-opacity="0.38"/><rect x="985" y="122" width="1" height="2" fill="#61afef" fill-opacity="0.38"/><rect x="986" y="122" width="1" height="2" fill="#61afef" fill-opacity="0.38"/><rect x="987" y="122" width="1" height="2" fill="#61afef" fill-opacity="0.38"/><rect x="988" y="122" width="1" height="2" fill="#d7dae0" fill-opacity="0.22"/><rect x="989" y="122" width="1" height="2" fill="#d7dae0" fill-opacity="0.22"/><rect x="990" y="122" width="1" height="2" fill="#d7dae0" fill-opacity="0.38"/><rect x="991" y="122" width="1" height="2" fill="#ffd700" fill-opacity="0.32"/><rect x="948" y="124" width="1" height="2" fill="#61afef" fill-opacity="0.38"/><rect x="949" y="124" width="1" height="2" fill="#61afef" fill-opacity="0.38"/><rect x="950" y="124" width="1" height="2" fill="#61afef" fill-opacity="0.5"/><rect x="951" y="124" width="1" height="2" fill="#61afef" fill-opacity="0.44"/><rect x="952" y="124" width="1" height="2" fill="#61afef" fill-opacity="0.38"/><rect x="953" y="124" width="1" height="2" fill="#d7dae0" fill-opacity="0.22"/><rect x="954" y="124" width="1" height="2" fill="#d7dae0" fill-opacity="0.38"/><rect x="955" y="124" width="1" height="2" fill="#d7dae0" fill-opacity="0.38"/><rect x="956" y="124" width="1" height="2" fill="#d7dae0" fill-opacity="0.22"/><rect x="957" y="124" width="1" height="2" fill="#d7dae0" fill-opacity="0.38"/><rect x="958" y="124" width="1" height="2" fill="#d7dae0" fill-opacity="0.38"/><rect x="960" y="124" width="1" height="2" fill="#e06c75" fill-opacity="0.32"/><rect x="962" y="124" width="1" height="2" fill="#61afef" fill-opacity="0.38"/><rect x="963" y="124" width="1" height="2" fill="#61afef" fill-opacity="0.38"/><rect x="964" y="124" width="1" height="2" fill="#61afef" fill-opacity="0.38"/><rect x="965" y="124" width="1" height="2" fill="#d7dae0" fill-opacity="0.22"/><rect x="966" y="124" width="1" height="2" fill="#d7dae0" fill-opacity="0.22"/><rect x="967" y="124" width="1" height="2" fill="#d7dae0" fill-opacity="0.38"/><rect x="948" y="126" width="1" height="2" fill="#98c379" fill-opacity="0.38"/><rect x="949" y="126" width="1" height="2" fill="#98c379" fill-opacity="0.38"/><rect x="950" y="126" width="1" height="2" fill="#98c379" fill-opacity="0.38"/><rect x="951" y="126" width="1" height="2" fill="#98c379" fill-opacity="0.44"/><rect x="952" y="126" width="1" height="2" fill="#98c379" fill-opacity="0.22"/><rect x="953" y="126" width="1" height="2" fill="#98c379" fill-opacity="0.38"/><rect x="954" y="126" width="1" height="2" fill="#98c379" fill-opacity="0.22"/><rect x="955" y="126" width="1" height="2" fill="#98c379" fill-opacity="0.38"/><rect x="956" y="126" width="1" height="2" fill="#98c379" fill-opacity="0.38"/><rect x="957" y="126" width="1" height="2" fill="#98c379" fill-opacity="0.44"/><rect x="958" y="126" width="1" height="2" fill="#98c379" fill-opacity="0.38"/><rect x="959" y="126" width="1" height="2" fill="#98c379" fill-opacity="0.22"/><rect x="960" y="126" width="1" height="2" fill="#98c379" fill-opacity="0.38"/><rect x="961" y="126" width="1" height="2" fill="#98c379" fill-opacity="0.38"/><rect x="962" y="126" width="1" height="2" fill="#ffd700" fill-opacity="0.32"/><rect x="963" y="126" width="1" height="2" fill="#da70d6" fill-opacity="0.32"/><rect x="950" y="128" width="1" height="2" fill="#e06c75" fill-opacity="0.22"/><rect x="951" y="128" width="1" height="2" fill="#e06c75" fill-opacity="0.22"/><rect x="952" y="128" width="1" height="2" fill="#e06c75" fill-opacity="0.22"/><rect x="953" y="128" width="1" height="2" fill="#d7dae0" fill-opacity="0.38"/><rect x="954" y="128" width="1" height="2" fill="#d7dae0" fill-opacity="0.38"/><rect x="955" y="128" width="1" height="2" fill="#d7dae0" fill-opacity="0.38"/><rect x="948" y="130" width="1" height="2" fill="#da70d6" fill-opacity="0.32"/><rect x="949" y="130" width="1" height="2" fill="#ffd700" fill-opacity="0.32"/><rect x="946" y="132" width="1" height="2" fill="#179fff" fill-opacity="0.32"/><rect x="944" y="134" width="1" height="2" fill="#da70d6" fill-opacity="0.32"/><rect x="945" y="134" width="1" height="2" fill="#ffd700" fill-opacity="0.32"/><rect x="944" y="138" width="1" height="2" fill="#56b6c2" fill-opacity="0.38"/><rect x="945" y="138" width="1" height="2" fill="#56b6c2" fill-opacity="0.38"/><rect x="946" y="138" width="1" height="2" fill="#56b6c2" fill-opacity="0.38"/><rect x="947" y="138" width="1" height="2" fill="#56b6c2" fill-opacity="0.38"/><rect x="948" y="138" width="1" height="2" fill="#56b6c2" fill-opacity="0.38"/><rect x="950" y="138" width="1" height="2" fill="#61afef" fill-opacity="0.38"/><rect x="951" y="138" width="1" height="2" fill="#61afef" fill-opacity="0.38"/><rect x="952" y="138" width="1" height="2" fill="#61afef" fill-opacity="0.38"/><rect x="953" y="138" width="1" height="2" fill="#61afef" fill-opacity="0.44"/><rect x="954" y="138" width="1" height="2" fill="#61afef" fill-opacity="0.22"/><rect x="955" y="138" width="1" height="2" fill="#61afef" fill-opacity="0.38"/><rect x="956" y="138" width="1" height="2" fill="#61afef" fill-opacity="0.22"/><rect x="957" y="138" width="1" height="2" fill="#61afef" fill-opacity="0.38"/><rect x="959" y="138" width="1" height="2" fill="#e06c75" fill-opacity="0.32"/><rect x="961" y="138" width="1" height="2" fill="#98c379" fill-opacity="0.38"/><rect x="962" y="138" width="1" height="2" fill="#98c379" fill-opacity="0.38"/><rect x="963" y="138" width="1" height="2" fill="#98c379" fill-opacity="0.5"/><rect x="964" y="138" width="1" height="2" fill="#98c379" fill-opacity="0.38"/><rect x="965" y="138" width="1" height="2" fill="#98c379" fill-opacity="0.38"/><rect x="966" y="138" width="1" height="2" fill="#98c379" fill-opacity="0.38"/><rect x="967" y="138" width="1" height="2" fill="#98c379" fill-opacity="0.38"/><rect x="968" y="138" width="1" height="2" fill="#98c379" fill-opacity="0.38"/><rect x="969" y="138" width="1" height="2" fill="#ffd700" fill-opacity="0.32"/><rect x="970" y="138" width="1" height="2" fill="#da70d6" fill-opacity="0.32"/><rect x="971" y="138" width="1" height="2" fill="#da70d6" fill-opacity="0.32"/><rect x="973" y="138" width="1" height="2" fill="#56b6c2" fill-opacity="0.32"/><rect x="974" y="138" width="1" height="2" fill="#56b6c2" fill-opacity="0.32"/><rect x="976" y="138" width="1" height="2" fill="#da70d6" fill-opacity="0.32"/><rect x="977" y="138" width="1" height="2" fill="#e06c75" fill-opacity="0.22"/><rect x="978" y="138" width="1" height="2" fill="#98c379" fill-opacity="0.38"/><rect x="979" y="138" width="1" height="2" fill="#98c379" fill-opacity="0.38"/><rect x="980" y="138" width="1" height="2" fill="#98c379" fill-opacity="0.38"/><rect x="981" y="138" width="1" height="2" fill="#98c379" fill-opacity="0.38"/><rect x="982" y="138" width="1" height="2" fill="#98c379" fill-opacity="0.38"/><rect x="983" y="138" width="1" height="2" fill="#179fff" fill-opacity="0.32"/><rect x="984" y="138" width="1" height="2" fill="#d7dae0" fill-opacity="0.22"/><rect x="985" y="138" width="1" height="2" fill="#d7dae0" fill-opacity="0.38"/><rect x="986" y="138" width="1" height="2" fill="#d7dae0" fill-opacity="0.44"/><rect x="987" y="138" width="1" height="2" fill="#d7dae0" fill-opacity="0.38"/><rect x="988" y="138" width="1" height="2" fill="#d7dae0" fill-opacity="0.38"/><rect x="989" y="138" width="1" height="2" fill="#d7dae0" fill-opacity="0.38"/><rect x="990" y="138" width="1" height="2" fill="#d7dae0" fill-opacity="0.38"/><rect x="991" y="138" width="1" height="2" fill="#d7dae0" fill-opacity="0.38"/><rect x="992" y="138" width="1" height="2" fill="#179fff" fill-opacity="0.32"/><rect x="994" y="138" width="1" height="2" fill="#e06c75" fill-opacity="0.38"/><rect x="996" y="138" width="1" height="2" fill="#e5c07b" fill-opacity="0.22"/><rect x="997" y="138" width="8" height="2" fill="#e5c07b" fill-opacity="0.45"/><rect x="1005" y="138" width="1" height="2" fill="#e5c07b" fill-opacity="0.22"/><rect x="1007" y="138" width="1" height="2" fill="#e06c75" fill-opacity="0.22"/><rect x="1009" y="138" width="1" height="2" fill="#e5c07b" fill-opacity="0.22"/><rect x="1010" y="138" width="8" height="2" fill="#e5c07b" fill-opacity="0.45"/><rect x="1018" y="138" width="1" height="2" fill="#e5c07b" fill-opacity="0.22"/><rect x="1019" y="138" width="1" height="2" fill="#da70d6" fill-opacity="0.32"/><rect x="1020" y="138" width="1" height="2" fill="#ffd700" fill-opacity="0.32"/><rect x="944" y="142" width="1" height="2" fill="#e06c75" fill-opacity="0.38"/><rect x="945" y="142" width="1" height="2" fill="#e06c75" fill-opacity="0.38"/><rect x="946" y="142" width="1" height="2" fill="#e06c75" fill-opacity="0.38"/><rect x="947" y="142" width="1" height="2" fill="#e06c75" fill-opacity="0.38"/><rect x="948" y="142" width="1" height="2" fill="#e06c75" fill-opacity="0.38"/><rect x="950" y="142" width="1" height="2" fill="#56b6c2" fill-opacity="0.38"/><rect x="951" y="142" width="1" height="2" fill="#56b6c2" fill-opacity="0.38"/><rect x="952" y="142" width="1" height="2" fill="#56b6c2" fill-opacity="0.38"/><rect x="953" y="142" width="1" height="2" fill="#56b6c2" fill-opacity="0.38"/><rect x="954" y="142" width="1" height="2" fill="#56b6c2" fill-opacity="0.38"/><rect x="955" y="142" width="1" height="2" fill="#56b6c2" fill-opacity="0.22"/><rect x="956" y="142" width="1" height="2" fill="#56b6c2" fill-opacity="0.38"/><rect x="957" y="142" width="1" height="2" fill="#56b6c2" fill-opacity="0.38"/><rect x="959" y="142" width="1" height="2" fill="#98c379" fill-opacity="0.38"/><rect x="960" y="142" width="1" height="2" fill="#98c379" fill-opacity="0.38"/><rect x="961" y="142" width="1" height="2" fill="#98c379" fill-opacity="0.38"/><rect x="962" y="142" width="1" height="2" fill="#98c379" fill-opacity="0.38"/><rect x="963" y="142" width="1" height="2" fill="#98c379" fill-opacity="0.22"/><rect x="964" y="142" width="1" height="2" fill="#98c379" fill-opacity="0.38"/><rect x="965" y="142" width="1" height="2" fill="#98c379" fill-opacity="0.44"/><rect x="966" y="142" width="1" height="2" fill="#98c379" fill-opacity="0.38"/><rect x="967" y="142" width="1" height="2" fill="#98c379" fill-opacity="0.38"/><rect x="968" y="142" width="1" height="2" fill="#98c379" fill-opacity="0.5"/><rect x="969" y="142" width="1" height="2" fill="#98c379" fill-opacity="0.22"/><rect x="970" y="142" width="1" height="2" fill="#98c379" fill-opacity="0.38"/><rect x="971" y="142" width="1" height="2" fill="#179fff" fill-opacity="0.32"/><rect x="972" y="142" width="1" height="2" fill="#179fff" fill-opacity="0.32"/><rect x="974" y="142" width="1" height="2" fill="#d7dae0" fill-opacity="0.32"/><rect x="946" y="144" width="1" height="2" fill="#e06c75" fill-opacity="0.38"/><rect x="947" y="144" width="1" height="2" fill="#e06c75" fill-opacity="0.38"/><rect x="948" y="144" width="1" height="2" fill="#e06c75" fill-opacity="0.38"/><rect x="950" y="144" width="1" height="2" fill="#d7dae0" fill-opacity="0.32"/><rect x="948" y="146" width="1" height="2" fill="#56b6c2" fill-opacity="0.38"/><rect x="949" y="146" width="1" height="2" fill="#56b6c2" fill-opacity="0.38"/><rect x="950" y="146" width="1" height="2" fill="#56b6c2" fill-opacity="0.38"/><rect x="951" y="146" width="1" height="2" fill="#56b6c2" fill-opacity="0.38"/><rect x="952" y="146" width="1" height="2" fill="#56b6c2" fill-opacity="0.38"/><rect x="954" y="146" width="1" height="2" fill="#61afef" fill-opacity="0.38"/><rect x="955" y="146" width="1" height="2" fill="#61afef" fill-opacity="0.38"/><rect x="956" y="146" width="1" height="2" fill="#61afef" fill-opacity="0.22"/><rect x="957" y="146" width="1" height="2" fill="#61afef" fill-opacity="0.38"/><rect x="958" y="146" width="1" height="2" fill="#61afef" fill-opacity="0.38"/><rect x="959" y="146" width="1" height="2" fill="#61afef" fill-opacity="0.38"/><rect x="961" y="146" width="1" height="2" fill="#e06c75" fill-opacity="0.32"/><rect x="963" y="146" width="1" height="2" fill="#e06c75" fill-opacity="0.38"/><rect x="964" y="146" width="1" height="2" fill="#e06c75" fill-opacity="0.5"/><rect x="965" y="146" width="1" height="2" fill="#e06c75" fill-opacity="0.38"/><rect x="966" y="146" width="1" height="2" fill="#e06c75" fill-opacity="0.22"/><rect x="967" y="146" width="1" height="2" fill="#e06c75" fill-opacity="0.38"/><rect x="969" y="146" width="1" height="2" fill="#98c379" fill-opacity="0.38"/><rect x="970" y="146" width="1" height="2" fill="#98c379" fill-opacity="0.38"/><rect x="971" y="146" width="1" height="2" fill="#98c379" fill-opacity="0.22"/><rect x="972" y="146" width="1" height="2" fill="#98c379" fill-opacity="0.22"/><rect x="973" y="146" width="1" height="2" fill="#98c379" fill-opacity="0.38"/><rect x="974" y="146" width="1" height="2" fill="#98c379" fill-opacity="0.38"/><rect x="975" y="146" width="1" height="2" fill="#98c379" fill-opacity="0.38"/><rect x="976" y="146" width="1" height="2" fill="#98c379" fill-opacity="0.38"/><rect x="977" y="146" width="1" height="2" fill="#d7dae0" fill-opacity="0.32"/><rect x="978" y="146" width="1" height="2" fill="#d7dae0" fill-opacity="0.32"/><rect x="948" y="148" width="1" height="2" fill="#98c379" fill-opacity="0.38"/><rect x="949" y="148" width="1" height="2" fill="#98c379" fill-opacity="0.38"/><rect x="950" y="148" width="1" height="2" fill="#98c379" fill-opacity="0.38"/><rect x="951" y="148" width="1" height="2" fill="#98c379" fill-opacity="0.5"/><rect x="952" y="148" width="1" height="2" fill="#98c379" fill-opacity="0.38"/><rect x="953" y="148" width="1" height="2" fill="#98c379" fill-opacity="0.38"/><rect x="954" y="148" width="1" height="2" fill="#98c379" fill-opacity="0.38"/><rect x="955" y="148" width="1" height="2" fill="#98c379" fill-opacity="0.22"/><rect x="956" y="148" width="1" height="2" fill="#98c379" fill-opacity="0.44"/><rect x="957" y="148" width="1" height="2" fill="#98c379" fill-opacity="0.38"/><rect x="958" y="148" width="1" height="2" fill="#98c379" fill-opacity="0.38"/><rect x="959" y="148" width="1" height="2" fill="#98c379" fill-opacity="0.38"/><rect x="960" y="148" width="1" height="2" fill="#98c379" fill-opacity="0.38"/><rect x="961" y="148" width="1" height="2" fill="#d7dae0" fill-opacity="0.32"/><rect x="962" y="148" width="1" height="2" fill="#d7dae0" fill-opacity="0.32"/><rect x="964" y="148" width="1" height="2" fill="#d7dae0" fill-opacity="0.38"/><rect x="965" y="148" width="1" height="2" fill="#d7dae0" fill-opacity="0.38"/><rect x="966" y="148" width="1" height="2" fill="#d7dae0" fill-opacity="0.38"/><rect x="967" y="148" width="1" height="2" fill="#d7dae0" fill-opacity="0.38"/><rect x="968" y="148" width="1" height="2" fill="#d7dae0" fill-opacity="0.22"/><rect x="969" y="148" width="1" height="2" fill="#d7dae0" fill-opacity="0.38"/><rect x="970" y="148" width="1" height="2" fill="#d7dae0" fill-opacity="0.5"/><rect x="971" y="148" width="1" height="2" fill="#d7dae0" fill-opacity="0.44"/><rect x="972" y="148" width="1" height="2" fill="#d7dae0" fill-opacity="0.38"/><rect x="973" y="148" width="1" height="2" fill="#d7dae0" fill-opacity="0.38"/><rect x="974" y="148" width="1" height="2" fill="#d7dae0" fill-opacity="0.38"/><rect x="975" y="148" width="1" height="2" fill="#d7dae0" fill-opacity="0.22"/><rect x="976" y="148" width="1" height="2" fill="#d7dae0" fill-opacity="0.38"/><rect x="977" y="148" width="1" height="2" fill="#d7dae0" fill-opacity="0.38"/><rect x="978" y="148" width="1" height="2" fill="#d7dae0" fill-opacity="0.22"/><rect x="980" y="148" width="1" height="2" fill="#56b6c2" fill-opacity="0.38"/><rect x="981" y="148" width="1" height="2" fill="#56b6c2" fill-opacity="0.38"/><rect x="982" y="148" width="1" height="2" fill="#56b6c2" fill-opacity="0.38"/><rect x="983" y="148" width="1" height="2" fill="#56b6c2" fill-opacity="0.38"/><rect x="985" y="148" width="1" height="2" fill="#d7dae0" fill-opacity="0.32"/><rect x="986" y="148" width="1" height="2" fill="#d7dae0" fill-opacity="0.32"/><rect x="948" y="150" width="1" height="2" fill="#e06c75" fill-opacity="0.22"/><rect x="949" y="150" width="1" height="2" fill="#e06c75" fill-opacity="0.38"/><rect x="951" y="150" width="1" height="2" fill="#d7dae0" fill-opacity="0.32"/><rect x="952" y="150" width="1" height="2" fill="#98c379" fill-opacity="0.38"/><rect x="953" y="150" width="1" height="2" fill="#98c379" fill-opacity="0.38"/><rect x="954" y="150" width="1" height="2" fill="#98c379" fill-opacity="0.38"/><rect x="955" y="150" width="1" height="2" fill="#98c379" fill-opacity="0.38"/><rect x="956" y="150" width="1" height="2" fill="#98c379" fill-opacity="0.38"/><rect x="957" y="150" width="1" height="2" fill="#d7dae0" fill-opacity="0.32"/><rect x="958" y="150" width="1" height="2" fill="#d7dae0" fill-opacity="0.22"/><rect x="959" y="150" width="1" height="2" fill="#d7dae0" fill-opacity="0.38"/><rect x="960" y="150" width="1" height="2" fill="#d7dae0" fill-opacity="0.44"/><rect x="961" y="150" width="1" height="2" fill="#d7dae0" fill-opacity="0.38"/><rect x="962" y="150" width="1" height="2" fill="#d7dae0" fill-opacity="0.38"/><rect x="963" y="150" width="1" height="2" fill="#d7dae0" fill-opacity="0.38"/><rect x="964" y="150" width="1" height="2" fill="#d7dae0" fill-opacity="0.38"/><rect x="965" y="150" width="1" height="2" fill="#d7dae0" fill-opacity="0.38"/><rect x="966" y="150" width="1" height="2" fill="#d7dae0" fill-opacity="0.32"/><rect x="967" y="150" width="1" height="2" fill="#d7dae0" fill-opacity="0.32"/><rect x="969" y="150" width="1" height="2" fill="#d7dae0" fill-opacity="0.32"/><rect x="950" y="152" width="1" height="2" fill="#e06c75" fill-opacity="0.38"/><rect x="951" y="152" width="1" height="2" fill="#e06c75" fill-opacity="0.5"/><rect x="952" y="152" width="1" height="2" fill="#e06c75" fill-opacity="0.38"/><rect x="953" y="152" width="1" height="2" fill="#e06c75" fill-opacity="0.22"/><rect x="954" y="152" width="1" height="2" fill="#e06c75" fill-opacity="0.38"/><rect x="956" y="152" width="1" height="2" fill="#98c379" fill-opacity="0.38"/><rect x="957" y="152" width="1" height="2" fill="#98c379" fill-opacity="0.38"/><rect x="958" y="152" width="1" height="2" fill="#98c379" fill-opacity="0.38"/><rect x="959" y="152" width="1" height="2" fill="#98c379" fill-opacity="0.38"/><rect x="960" y="152" width="1" height="2" fill="#98c379" fill-opacity="0.38"/><rect x="961" y="152" width="1" height="2" fill="#98c379" fill-opacity="0.38"/><rect x="962" y="152" width="1" height="2" fill="#98c379" fill-opacity="0.44"/><rect x="963" y="152" width="1" height="2" fill="#98c379" fill-opacity="0.38"/><rect x="964" y="152" width="1" height="2" fill="#98c379" fill-opacity="0.38"/><rect x="965" y="152" width="1" height="2" fill="#98c379" fill-opacity="0.38"/><rect x="966" y="152" width="1" height="2" fill="#98c379" fill-opacity="0.44"/><rect x="967" y="152" width="1" height="2" fill="#98c379" fill-opacity="0.38"/><rect x="968" y="152" width="1" height="2" fill="#98c379" fill-opacity="0.22"/><rect x="969" y="152" width="1" height="2" fill="#d7dae0" fill-opacity="0.32"/><rect x="970" y="152" width="1" height="2" fill="#d7dae0" fill-opacity="0.38"/><rect x="971" y="152" width="1" height="2" fill="#d7dae0" fill-opacity="0.38"/><rect x="972" y="152" width="1" height="2" fill="#d7dae0" fill-opacity="0.22"/><rect x="973" y="152" width="1" height="2" fill="#d7dae0" fill-opacity="0.38"/><rect x="974" y="152" width="1" height="2" fill="#d7dae0" fill-opacity="0.38"/><rect x="975" y="152" width="1" height="2" fill="#d7dae0" fill-opacity="0.38"/><rect x="976" y="152" width="1" height="2" fill="#d7dae0" fill-opacity="0.32"/><rect x="948" y="154" width="1" height="2" fill="#d7dae0" fill-opacity="0.32"/><rect x="950" y="154" width="1" height="2" fill="#e06c75" fill-opacity="0.38"/><rect x="951" y="154" width="1" height="2" fill="#e06c75" fill-opacity="0.22"/><rect x="952" y="154" width="1" height="2" fill="#e06c75" fill-opacity="0.38"/><rect x="953" y="154" width="1" height="2" fill="#e06c75" fill-opacity="0.38"/><rect x="955" y="154" width="1" height="2" fill="#d7dae0" fill-opacity="0.32"/><rect x="950" y="156" width="1" height="2" fill="#e06c75" fill-opacity="0.38"/><rect x="951" y="156" width="1" height="2" fill="#e06c75" fill-opacity="0.5"/><rect x="952" y="156" width="1" height="2" fill="#e06c75" fill-opacity="0.38"/><rect x="953" y="156" width="1" height="2" fill="#e06c75" fill-opacity="0.22"/><rect x="954" y="156" width="1" height="2" fill="#e06c75" fill-opacity="0.38"/><rect x="956" y="156" width="1" height="2" fill="#98c379" fill-opacity="0.38"/><rect x="957" y="156" width="1" height="2" fill="#98c379" fill-opacity="0.38"/><rect x="958" y="156" width="1" height="2" fill="#98c379" fill-opacity="0.38"/><rect x="959" y="156" width="1" height="2" fill="#98c379" fill-opacity="0.38"/><rect x="960" y="156" width="1" height="2" fill="#98c379" fill-opacity="0.38"/><rect x="961" y="156" width="1" height="2" fill="#98c379" fill-opacity="0.38"/><rect x="962" y="156" width="1" height="2" fill="#98c379" fill-opacity="0.44"/><rect x="963" y="156" width="1" height="2" fill="#98c379" fill-opacity="0.38"/><rect x="964" y="156" width="1" height="2" fill="#98c379" fill-opacity="0.38"/><rect x="965" y="156" width="1" height="2" fill="#98c379" fill-opacity="0.38"/><rect x="966" y="156" width="1" height="2" fill="#98c379" fill-opacity="0.44"/><rect x="967" y="156" width="1" height="2" fill="#98c379" fill-opacity="0.38"/><rect x="968" y="156" width="1" height="2" fill="#98c379" fill-opacity="0.22"/><rect x="969" y="156" width="1" height="2" fill="#d7dae0" fill-opacity="0.32"/><rect x="970" y="156" width="1" height="2" fill="#d7dae0" fill-opacity="0.38"/><rect x="971" y="156" width="1" height="2" fill="#d7dae0" fill-opacity="0.38"/><rect x="972" y="156" width="1" height="2" fill="#d7dae0" fill-opacity="0.22"/><rect x="973" y="156" width="1" height="2" fill="#d7dae0" fill-opacity="0.38"/><rect x="974" y="156" width="1" height="2" fill="#d7dae0" fill-opacity="0.38"/><rect x="975" y="156" width="1" height="2" fill="#d7dae0" fill-opacity="0.38"/><rect x="976" y="156" width="1" height="2" fill="#d7dae0" fill-opacity="0.32"/><rect x="948" y="158" width="1" height="2" fill="#d7dae0" fill-opacity="0.32"/><rect x="948" y="160" width="1" height="2" fill="#98c379" fill-opacity="0.38"/><rect x="949" y="160" width="1" height="2" fill="#98c379" fill-opacity="0.22"/><rect x="950" y="160" width="1" height="2" fill="#98c379" fill-opacity="0.38"/><rect x="951" y="160" width="1" height="2" fill="#98c379" fill-opacity="0.38"/><rect x="952" y="160" width="1" height="2" fill="#98c379" fill-opacity="0.38"/><rect x="953" y="160" width="1" height="2" fill="#98c379" fill-opacity="0.5"/><rect x="954" y="160" width="1" height="2" fill="#98c379" fill-opacity="0.38"/><rect x="955" y="160" width="1" height="2" fill="#98c379" fill-opacity="0.38"/><rect x="956" y="160" width="1" height="2" fill="#98c379" fill-opacity="0.38"/><rect x="957" y="160" width="1" height="2" fill="#98c379" fill-opacity="0.22"/><rect x="958" y="160" width="1" height="2" fill="#d7dae0" fill-opacity="0.32"/><rect x="959" y="160" width="1" height="2" fill="#d7dae0" fill-opacity="0.32"/><rect x="948" y="162" width="1" height="2" fill="#98c379" fill-opacity="0.38"/><rect x="949" y="162" width="1" height="2" fill="#98c379" fill-opacity="0.5"/><rect x="950" y="162" width="1" height="2" fill="#98c379" fill-opacity="0.22"/><rect x="951" y="162" width="1" height="2" fill="#98c379" fill-opacity="0.38"/><rect x="952" y="162" width="1" height="2" fill="#d7dae0" fill-opacity="0.32"/><rect x="953" y="162" width="1" height="2" fill="#e5c07b" fill-opacity="0.22"/><rect x="954" y="162" width="1" height="2" fill="#e5c07b" fill-opacity="0.38"/><rect x="955" y="162" width="1" height="2" fill="#e5c07b" fill-opacity="0.38"/><rect x="956" y="162" width="1" height="2" fill="#e5c07b" fill-opacity="0.38"/><rect x="957" y="162" width="1" height="2" fill="#e5c07b" fill-opacity="0.38"/><rect x="958" y="162" width="1" height="2" fill="#e5c07b" fill-opacity="0.38"/><rect x="959" y="162" width="1" height="2" fill="#e5c07b" fill-opacity="0.38"/><rect x="960" y="162" width="1" height="2" fill="#e5c07b" fill-opacity="0.38"/><rect x="961" y="162" width="1" height="2" fill="#e5c07b" fill-opacity="0.22"/><rect x="962" y="162" width="1" height="2" fill="#d7dae0" fill-opacity="0.32"/><rect x="946" y="164" width="1" height="2" fill="#d7dae0" fill-opacity="0.32"/><rect x="948" y="164" width="1" height="2" fill="#e06c75" fill-opacity="0.38"/><rect x="949" y="164" width="1" height="2" fill="#e06c75" fill-opacity="0.22"/><rect x="950" y="164" width="1" height="2" fill="#e06c75" fill-opacity="0.38"/><rect x="951" y="164" width="1" height="2" fill="#e06c75" fill-opacity="0.38"/><rect x="952" y="164" width="1" height="2" fill="#e06c75" fill-opacity="0.22"/><rect x="953" y="164" width="1" height="2" fill="#e06c75" fill-opacity="0.22"/><rect x="954" y="164" width="1" height="2" fill="#e06c75" fill-opacity="0.38"/><rect x="956" y="164" width="1" height="2" fill="#d7dae0" fill-opacity="0.32"/><rect x="948" y="166" width="1" height="2" fill="#98c379" fill-opacity="0.38"/><rect x="949" y="166" width="1" height="2" fill="#98c379" fill-opacity="0.38"/><rect x="950" y="166" width="1" height="2" fill="#98c379" fill-opacity="0.38"/><rect x="951" y="166" width="1" height="2" fill="#98c379" fill-opacity="0.5"/><rect x="952" y="166" width="1" height="2" fill="#98c379" fill-opacity="0.38"/><rect x="953" y="166" width="1" height="2" fill="#98c379" fill-opacity="0.38"/><rect x="954" y="166" width="1" height="2" fill="#98c379" fill-opacity="0.38"/><rect x="955" y="166" width="1" height="2" fill="#98c379" fill-opacity="0.22"/><rect x="956" y="166" width="1" height="2" fill="#98c379" fill-opacity="0.44"/><rect x="957" y="166" width="1" height="2" fill="#98c379" fill-opacity="0.38"/><rect x="958" y="166" width="1" height="2" fill="#98c379" fill-opacity="0.38"/><rect x="959" y="166" width="1" height="2" fill="#98c379" fill-opacity="0.38"/><rect x="960" y="166" width="1" height="2" fill="#98c379" fill-opacity="0.38"/><rect x="961" y="166" width="1" height="2" fill="#d7dae0" fill-opacity="0.32"/><rect x="962" y="166" width="1" height="2" fill="#d7dae0" fill-opacity="0.32"/><rect x="964" y="166" width="1" height="2" fill="#d7dae0" fill-opacity="0.38"/><rect x="965" y="166" width="1" height="2" fill="#d7dae0" fill-opacity="0.38"/><rect x="966" y="166" width="1" height="2" fill="#d7dae0" fill-opacity="0.38"/><rect x="967" y="166" width="1" height="2" fill="#d7dae0" fill-opacity="0.38"/><rect x="968" y="166" width="1" height="2" fill="#d7dae0" fill-opacity="0.22"/><rect x="969" y="166" width="1" height="2" fill="#d7dae0" fill-opacity="0.38"/><rect x="970" y="166" width="1" height="2" fill="#d7dae0" fill-opacity="0.5"/><rect x="971" y="166" width="1" height="2" fill="#d7dae0" fill-opacity="0.44"/><rect x="972" y="166" width="1" height="2" fill="#d7dae0" fill-opacity="0.38"/><rect x="973" y="166" width="1" height="2" fill="#d7dae0" fill-opacity="0.38"/><rect x="974" y="166" width="1" height="2" fill="#d7dae0" fill-opacity="0.38"/><rect x="975" y="166" width="1" height="2" fill="#d7dae0" fill-opacity="0.22"/><rect x="976" y="166" width="1" height="2" fill="#d7dae0" fill-opacity="0.38"/><rect x="977" y="166" width="1" height="2" fill="#d7dae0" fill-opacity="0.38"/><rect x="978" y="166" width="1" height="2" fill="#d7dae0" fill-opacity="0.22"/><rect x="980" y="166" width="1" height="2" fill="#56b6c2" fill-opacity="0.38"/><rect x="981" y="166" width="1" height="2" fill="#56b6c2" fill-opacity="0.38"/><rect x="982" y="166" width="1" height="2" fill="#56b6c2" fill-opacity="0.22"/><rect x="983" y="166" width="1" height="2" fill="#56b6c2" fill-opacity="0.38"/><rect x="984" y="166" width="1" height="2" fill="#56b6c2" fill-opacity="0.38"/><rect x="986" y="166" width="1" height="2" fill="#d7dae0" fill-opacity="0.32"/><rect x="987" y="166" width="1" height="2" fill="#d7dae0" fill-opacity="0.32"/><rect x="946" y="168" width="1" height="2" fill="#d7dae0" fill-opacity="0.32"/><rect x="944" y="170" width="1" height="2" fill="#d7dae0" fill-opacity="0.32"/><rect x="944" y="172" width="1" height="2" fill="#abb2bf" fill-opacity="0.32"/><rect x="945" y="172" width="1" height="2" fill="#abb2bf" fill-opacity="0.32"/><rect x="946" y="172" width="1" height="2" fill="#e06c75" fill-opacity="0.38"/><rect x="947" y="172" width="1" height="2" fill="#e06c75" fill-opacity="0.38"/><rect x="948" y="172" width="1" height="2" fill="#e06c75" fill-opacity="0.38"/><rect x="949" y="172" width="1" height="2" fill="#e06c75" fill-opacity="0.22"/><rect x="950" y="172" width="1" height="2" fill="#e06c75" fill-opacity="0.38"/><rect x="951" y="172" width="1" height="2" fill="#e06c75" fill-opacity="0.38"/><rect x="952" y="172" width="1" height="2" fill="#abb2bf" fill-opacity="0.32"/></svg>
<div class="cursor"></div>
<div class="blame">You, <span class="cjb">前</span><span class="cjb">天</span> • feat: <span class="emo">✨</span> post init</div>
<div class="box" style="left:253px;top:160px;width:178px;height:31px;"></div>
<div class="box" style="left:279px;top:249px;width:99px;height:36px;"></div>
<div class="box" style="left:52px;top:275px;width:698px;height:34px;"></div>
<div class="box" style="left:244px;top:755px;width:110px;height:35px;border-width:3px;"></div>
<div class="box" style="left:496px;top:919px;width:222px;height:40px;border-width:3px;"></div>
</body></html>
